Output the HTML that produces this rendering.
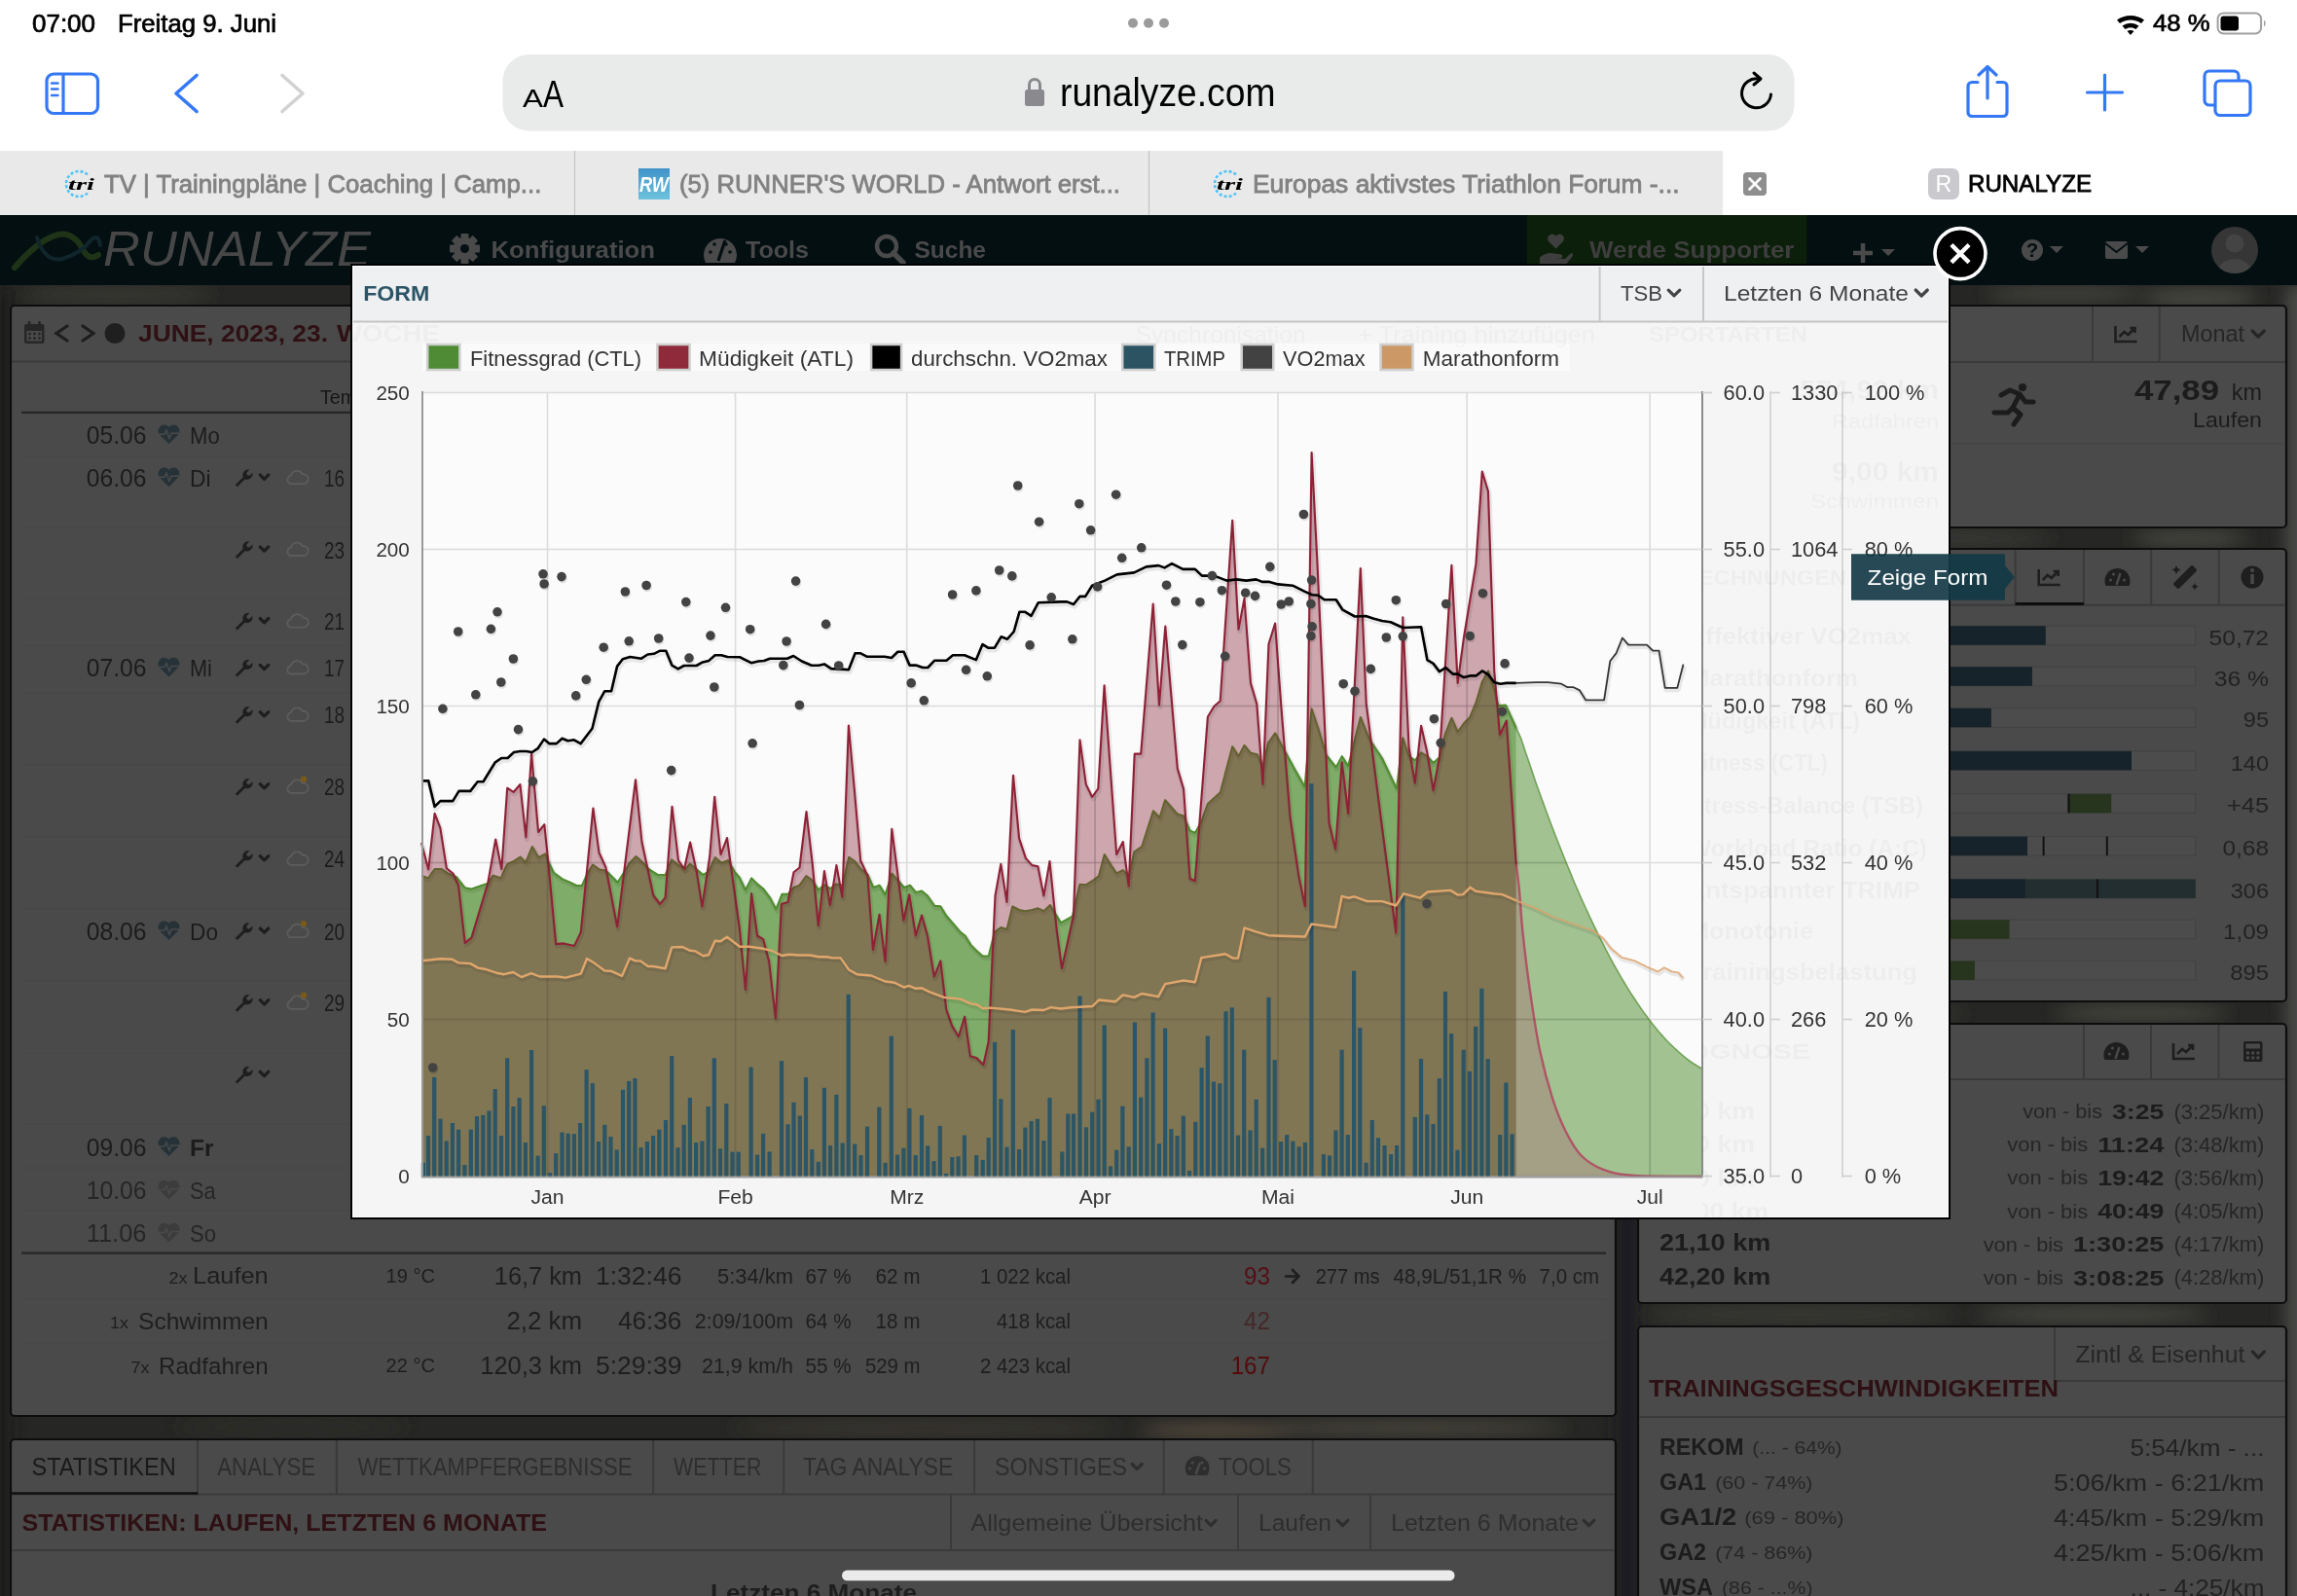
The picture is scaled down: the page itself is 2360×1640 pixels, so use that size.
<!DOCTYPE html>
<html><head><meta charset="utf-8"><title>Runalyze Form</title>
<style>html,body{margin:0;padding:0;background:#232323;width:2360px;height:1640px;overflow:hidden;font-family:"Liberation Sans",sans-serif}svg{display:block;will-change:transform}</style>
</head><body>
<svg width="2360" height="1640" viewBox="0 0 2360 1640" font-family="Liberation Sans, sans-serif">
<rect x="0.0" y="293.0" width="2360.0" height="1347.0" fill="#262624"/>
<defs><filter id="bl" x="-50%" y="-50%" width="200%" height="200%"><feGaussianBlur stdDeviation="9"/></filter></defs>
<g filter="url(#bl)">
<rect x="-20.0" y="293.0" width="31.0" height="1367.0" fill="#1c1c1c"/>
<rect x="2349.0" y="293.0" width="31.0" height="1367.0" fill="#4c4c48"/>
<rect x="1660.0" y="560.0" width="23.0" height="1100.0" fill="#1d1d20"/>
<ellipse cx="120" cy="303" rx="100" ry="8" fill="#3a3a34"/>
<ellipse cx="520" cy="305" rx="140" ry="7" fill="#35352f"/>
<ellipse cx="1760" cy="303" rx="90" ry="8" fill="#3c3c36"/>
<ellipse cx="2120" cy="302" rx="80" ry="8" fill="#45453f"/>
<ellipse cx="2260" cy="306" rx="60" ry="8" fill="#505049"/>
<ellipse cx="950" cy="1467" rx="200" ry="8" fill="#3a3833"/>
<ellipse cx="1450" cy="1467" rx="160" ry="8" fill="#4a463c"/>
<ellipse cx="1250" cy="1470" rx="80" ry="7" fill="#5a5040"/>
<ellipse cx="300" cy="1466" rx="120" ry="8" fill="#2e2e2c"/>
<ellipse cx="1950" cy="553" rx="160" ry="8" fill="#3e3e3a"/>
<ellipse cx="2250" cy="553" rx="60" ry="8" fill="#4a4a44"/>
<ellipse cx="1900" cy="1041" rx="120" ry="8" fill="#3a3a36"/>
<ellipse cx="2200" cy="1041" rx="90" ry="8" fill="#4a4a42"/>
<ellipse cx="1850" cy="1351" rx="160" ry="8" fill="#3e3e38"/>
<ellipse cx="2150" cy="1351" rx="120" ry="8" fill="#4a4a44"/>
<ellipse cx="1670" cy="420" rx="10" ry="100" fill="#3a3a36"/>
<ellipse cx="1670" cy="900" rx="10" ry="80" fill="#2e2e30"/>
</g>
<rect x="0.0" y="221.0" width="2360.0" height="72.0" fill="#040f12"/>
<path d="M15,275 Q40,246 60,241 Q76,238 86,258 Q92,268 101,262" fill="none" stroke="#1f3416" stroke-width="6" stroke-linecap="round"/>
<path d="M38,244 Q46,270 64,266 Q84,260 94,246 Q101,240 103,252" fill="none" stroke="#10262c" stroke-width="4" stroke-linecap="round"/>
<text x="106.0" y="272.5" font-size="50.87" fill="#474747" font-style="italic" textLength="275.0" lengthAdjust="spacingAndGlyphs">RUNALYZE</text>
<g transform="translate(477.5,255.5)" fill="#4a4a4a"><rect x="-4" y="-15.5" width="8" height="8" rx="1" transform="rotate(0)"/><rect x="-4" y="-15.5" width="8" height="8" rx="1" transform="rotate(45)"/><rect x="-4" y="-15.5" width="8" height="8" rx="1" transform="rotate(90)"/><rect x="-4" y="-15.5" width="8" height="8" rx="1" transform="rotate(135)"/><rect x="-4" y="-15.5" width="8" height="8" rx="1" transform="rotate(180)"/><rect x="-4" y="-15.5" width="8" height="8" rx="1" transform="rotate(225)"/><rect x="-4" y="-15.5" width="8" height="8" rx="1" transform="rotate(270)"/><rect x="-4" y="-15.5" width="8" height="8" rx="1" transform="rotate(315)"/><circle r="11.5"/><circle r="4.5" fill="#040f12"/></g>
<text x="504.5" y="265.0" font-size="24.71" fill="#4a4a4a" font-weight="bold" textLength="168.5" lengthAdjust="spacingAndGlyphs">Konfiguration</text>
<path d="M725,270 A17,17 0 1 1 755,270 Z" fill="#4a4a4a"/>
<path d="M738,268 L745,247" stroke="#040f12" stroke-width="3.2"/>
<circle cx="730.0" cy="259.0" r="1.8" fill="#040f12"/>
<circle cx="734.0" cy="251.0" r="1.8" fill="#040f12"/>
<circle cx="750.0" cy="259.0" r="1.8" fill="#040f12"/>
<circle cx="746.0" cy="251.0" r="1.8" fill="#040f12"/>
<text x="766.0" y="265.0" font-size="24.71" fill="#4a4a4a" font-weight="bold" textLength="65.0" lengthAdjust="spacingAndGlyphs">Tools</text>
<circle cx="911" cy="253" r="10" fill="none" stroke="#4a4a4a" stroke-width="4.5"/>
<line x1="918.0" y1="260.0" x2="928.0" y2="270.0" stroke="#4a4a4a" stroke-width="5.5" stroke-linecap="round"/>
<text x="939.5" y="265.0" font-size="24.71" fill="#4a4a4a" font-weight="bold" textLength="73.5" lengthAdjust="spacingAndGlyphs">Suche</text>
<rect x="1569.0" y="221.0" width="287.0" height="72.0" fill="#0c1f0a"/>
<path d="M1598.5,255.5 L1591,248 A4.6,4.6 0 0 1 1598.5,242.5 A4.6,4.6 0 0 1 1606,248 Z" fill="#3e3e3e"/>
<path d="M1582,271 V264.5 Q1589,258.5 1597,260.5 L1604,261.5 Q1607,263.5 1603.5,265.5 L1597,265.5 L1608,266 L1613.5,260.5 Q1617.5,259.5 1615.5,263.5 L1609.5,271 Z" fill="#3e3e3e"/>
<text x="1633.0" y="265.0" font-size="24.71" fill="#3e3e3e" font-weight="bold" textLength="210.5" lengthAdjust="spacingAndGlyphs">Werde Supporter</text>
<line x1="1914.0" y1="250.0" x2="1914.0" y2="270.0" stroke="#4a4a4a" stroke-width="4.5"/>
<line x1="1904.0" y1="260.0" x2="1924.0" y2="260.0" stroke="#4a4a4a" stroke-width="4.5"/>
<path d="M1933,256 L1947,256 L1940,263 Z" fill="#4a4a4a"/>
<circle cx="2088" cy="257" r="11" fill="#4a4a4a"/>
<text x="2088.0" y="264.0" font-size="20.35" fill="#040f12" font-weight="bold" text-anchor="middle">?</text>
<path d="M2106,253 L2120,253 L2113,260 Z" fill="#4a4a4a"/>
<rect x="2163.0" y="248.0" width="23.0" height="18.0" fill="#4a4a4a" rx="2.0"/>
<polyline points="2163,250 2174.5,259 2186,250" fill="none" stroke="#040f12" stroke-width="2"/>
<path d="M2194,253 L2208,253 L2201,260 Z" fill="#4a4a4a"/>
<defs><clipPath id="avc"><circle cx="2296" cy="257" r="24"/></clipPath></defs>
<circle cx="2296" cy="257" r="24" fill="#363636"/>
<g clip-path="url(#avc)" fill="#444"><circle cx="2296" cy="250" r="9.5"/><ellipse cx="2296" cy="281" rx="18" ry="15"/></g>
<rect x="11.0" y="314.0" width="1649.0" height="1141.0" rx="4" fill="#494a49" stroke="#0d0d0d" stroke-width="2.2"/>
<line x1="12.0" y1="371.5" x2="1659.0" y2="371.5" stroke="#3a3a3a" stroke-width="2.0"/>
<rect x="25.0" y="333.0" width="20.5" height="20.0" fill="#262626" rx="2.0"/>
<rect x="27.5" y="340.0" width="15.5" height="10.5" fill="#4a4a4a"/>
<rect x="29.2" y="341.7" width="2.6" height="2.6" fill="#262626"/>
<rect x="29.2" y="346.2" width="2.6" height="2.6" fill="#262626"/>
<rect x="34.2" y="341.7" width="2.6" height="2.6" fill="#262626"/>
<rect x="34.2" y="346.2" width="2.6" height="2.6" fill="#262626"/>
<rect x="39.2" y="341.7" width="2.6" height="2.6" fill="#262626"/>
<rect x="39.2" y="346.2" width="2.6" height="2.6" fill="#262626"/>
<line x1="30.0" y1="330.0" x2="30.0" y2="336.0" stroke="#262626" stroke-width="2.5"/>
<line x1="40.5" y1="330.0" x2="40.5" y2="336.0" stroke="#262626" stroke-width="2.5"/>
<polyline points="69,335 58,342.5 69,350" fill="none" stroke="#1e1e1e" stroke-width="3.2" stroke-linecap="round"/>
<polyline points="85,335 96,342.5 85,350" fill="none" stroke="#1e1e1e" stroke-width="3.2" stroke-linecap="round"/>
<circle cx="118" cy="342.5" r="10.5" fill="#1f1f1f"/>
<text x="142.0" y="350.8" font-size="23.69" fill="#2f1014" font-weight="bold" textLength="195.0" lengthAdjust="spacingAndGlyphs">JUNE, 2023, 23.</text>
<text x="346.0" y="350.8" font-size="23.69" fill="#2f1014" font-weight="bold" textLength="106.0" lengthAdjust="spacingAndGlyphs">WOCHE</text>
<text x="329.0" y="414.5" font-size="19.62" fill="#151515">Temp.</text>
<line x1="22.0" y1="423.8" x2="1650.0" y2="423.8" stroke="#262626" stroke-width="2.2"/>
<line x1="22.0" y1="469.3" x2="1650.0" y2="469.3" stroke="#464746" stroke-width="1.0"/>
<line x1="22.0" y1="541.4" x2="1650.0" y2="541.4" stroke="#464746" stroke-width="1.0"/>
<line x1="22.0" y1="615.0" x2="1650.0" y2="615.0" stroke="#464746" stroke-width="1.0"/>
<line x1="22.0" y1="663.6" x2="1650.0" y2="663.6" stroke="#464746" stroke-width="1.0"/>
<line x1="22.0" y1="712.2" x2="1650.0" y2="712.2" stroke="#464746" stroke-width="1.0"/>
<line x1="22.0" y1="785.9" x2="1650.0" y2="785.9" stroke="#464746" stroke-width="1.0"/>
<line x1="22.0" y1="860.0" x2="1650.0" y2="860.0" stroke="#464746" stroke-width="1.0"/>
<line x1="22.0" y1="933.6" x2="1650.0" y2="933.6" stroke="#464746" stroke-width="1.0"/>
<line x1="22.0" y1="1008.0" x2="1650.0" y2="1008.0" stroke="#464746" stroke-width="1.0"/>
<line x1="22.0" y1="1082.5" x2="1650.0" y2="1082.5" stroke="#464746" stroke-width="1.0"/>
<line x1="22.0" y1="1154.6" x2="1650.0" y2="1154.6" stroke="#464746" stroke-width="1.0"/>
<line x1="22.0" y1="1200.0" x2="1650.0" y2="1200.0" stroke="#464746" stroke-width="1.0"/>
<line x1="22.0" y1="1244.0" x2="1650.0" y2="1244.0" stroke="#464746" stroke-width="1.0"/>
<text x="88.7" y="455.9" font-size="25.44" fill="#1c1c1c" textLength="61.8" lengthAdjust="spacingAndGlyphs">05.06</text>
<g transform="translate(162.0,436.3)"><path d="M11.5,20 L2,10.5 A5.6,5.6 0 0 1 11.5,2.5 A5.6,5.6 0 0 1 21,10.5 Z" fill="#263238"/><polyline points="1,10 7,10 9,6 12,14 14,9 22,9" fill="none" stroke="#4a4a4a" stroke-width="1.5"/></g>
<text x="195.0" y="455.8" font-size="24.71" fill="#1c1c1c" textLength="30.7" lengthAdjust="spacingAndGlyphs">Mo</text>
<text x="88.7" y="499.8" font-size="25.44" fill="#1c1c1c" textLength="61.8" lengthAdjust="spacingAndGlyphs">06.06</text>
<g transform="translate(162.0,480.2)"><path d="M11.5,20 L2,10.5 A5.6,5.6 0 0 1 11.5,2.5 A5.6,5.6 0 0 1 21,10.5 Z" fill="#263238"/><polyline points="1,10 7,10 9,6 12,14 14,9 22,9" fill="none" stroke="#4a4a4a" stroke-width="1.5"/></g>
<text x="195.0" y="499.7" font-size="24.71" fill="#1c1c1c" textLength="21.5" lengthAdjust="spacingAndGlyphs">Di</text>
<text x="88.7" y="695.1" font-size="25.44" fill="#1c1c1c" textLength="61.8" lengthAdjust="spacingAndGlyphs">07.06</text>
<g transform="translate(162.0,675.5)"><path d="M11.5,20 L2,10.5 A5.6,5.6 0 0 1 11.5,2.5 A5.6,5.6 0 0 1 21,10.5 Z" fill="#263238"/><polyline points="1,10 7,10 9,6 12,14 14,9 22,9" fill="none" stroke="#4a4a4a" stroke-width="1.5"/></g>
<text x="195.0" y="695.0" font-size="24.71" fill="#1c1c1c" textLength="22.9" lengthAdjust="spacingAndGlyphs">Mi</text>
<text x="88.7" y="965.7" font-size="25.44" fill="#1c1c1c" textLength="61.8" lengthAdjust="spacingAndGlyphs">08.06</text>
<g transform="translate(162.0,946.1)"><path d="M11.5,20 L2,10.5 A5.6,5.6 0 0 1 11.5,2.5 A5.6,5.6 0 0 1 21,10.5 Z" fill="#263238"/><polyline points="1,10 7,10 9,6 12,14 14,9 22,9" fill="none" stroke="#4a4a4a" stroke-width="1.5"/></g>
<text x="195.0" y="965.6" font-size="24.71" fill="#1c1c1c" textLength="29.0" lengthAdjust="spacingAndGlyphs">Do</text>
<text x="88.7" y="1187.6" font-size="25.44" fill="#1c1c1c" textLength="61.8" lengthAdjust="spacingAndGlyphs">09.06</text>
<g transform="translate(162.0,1168.0)"><path d="M11.5,20 L2,10.5 A5.6,5.6 0 0 1 11.5,2.5 A5.6,5.6 0 0 1 21,10.5 Z" fill="#263238"/><polyline points="1,10 7,10 9,6 12,14 14,9 22,9" fill="none" stroke="#4a4a4a" stroke-width="1.5"/></g>
<text x="195.0" y="1187.5" font-size="24.71" fill="#1c1c1c" font-weight="bold" textLength="24.4" lengthAdjust="spacingAndGlyphs">Fr</text>
<text x="88.7" y="1232.2" font-size="25.44" fill="#262626" textLength="61.8" lengthAdjust="spacingAndGlyphs">10.06</text>
<g transform="translate(162.0,1212.6)"><path d="M11.5,20 L2,10.5 A5.6,5.6 0 0 1 11.5,2.5 A5.6,5.6 0 0 1 21,10.5 Z" fill="#3c3c3c"/><polyline points="1,10 7,10 9,6 12,14 14,9 22,9" fill="none" stroke="#4a4a4a" stroke-width="1.5"/></g>
<text x="195.0" y="1232.1" font-size="24.71" fill="#262626" textLength="26.6" lengthAdjust="spacingAndGlyphs">Sa</text>
<text x="88.7" y="1276.1" font-size="25.44" fill="#262626" textLength="61.8" lengthAdjust="spacingAndGlyphs">11.06</text>
<g transform="translate(162.0,1256.5)"><path d="M11.5,20 L2,10.5 A5.6,5.6 0 0 1 11.5,2.5 A5.6,5.6 0 0 1 21,10.5 Z" fill="#3c3c3c"/><polyline points="1,10 7,10 9,6 12,14 14,9 22,9" fill="none" stroke="#4a4a4a" stroke-width="1.5"/></g>
<text x="195.0" y="1276.0" font-size="24.71" fill="#262626" textLength="27.0" lengthAdjust="spacingAndGlyphs">So</text>
<g transform="translate(240.8,482.2)" fill="#1e1e1e"><path d="M1,16 L9,8 A5.5,5.5 0 0 1 15.5,0.5 L12.5,3.5 L13,6 L15.5,6.5 L18.5,3.5 A5.5,5.5 0 0 1 11,10 L3,18 Z"/></g>
<polyline points="267.2,488.0 271.5,492.4 275.8,488.0" fill="none" stroke="#1e1e1e" stroke-width="3.2" stroke-linecap="round" stroke-linejoin="round"/>
<path transform="translate(295.0,483.2)" d="M3,14 A4.5,4.5 0 0 1 4,5.5 A6.5,6.5 0 0 1 16,4 A4.8,4.8 0 0 1 17.5,14 Z" fill="none" stroke="#5c5c5c" stroke-width="1.8"/>
<text x="333.0" y="499.7" font-size="24.71" fill="#1c1c1c" textLength="21.0" lengthAdjust="spacingAndGlyphs">16</text>
<g transform="translate(240.8,556.0)" fill="#1e1e1e"><path d="M1,16 L9,8 A5.5,5.5 0 0 1 15.5,0.5 L12.5,3.5 L13,6 L15.5,6.5 L18.5,3.5 A5.5,5.5 0 0 1 11,10 L3,18 Z"/></g>
<polyline points="267.2,561.9 271.5,566.1 275.8,561.9" fill="none" stroke="#1e1e1e" stroke-width="3.2" stroke-linecap="round" stroke-linejoin="round"/>
<path transform="translate(295.0,557.0)" d="M3,14 A4.5,4.5 0 0 1 4,5.5 A6.5,6.5 0 0 1 16,4 A4.8,4.8 0 0 1 17.5,14 Z" fill="none" stroke="#5c5c5c" stroke-width="1.8"/>
<text x="333.0" y="573.5" font-size="24.71" fill="#1c1c1c" textLength="21.0" lengthAdjust="spacingAndGlyphs">23</text>
<g transform="translate(240.8,629.6)" fill="#1e1e1e"><path d="M1,16 L9,8 A5.5,5.5 0 0 1 15.5,0.5 L12.5,3.5 L13,6 L15.5,6.5 L18.5,3.5 A5.5,5.5 0 0 1 11,10 L3,18 Z"/></g>
<polyline points="267.2,635.5 271.5,639.8 275.8,635.5" fill="none" stroke="#1e1e1e" stroke-width="3.2" stroke-linecap="round" stroke-linejoin="round"/>
<path transform="translate(295.0,630.6)" d="M3,14 A4.5,4.5 0 0 1 4,5.5 A6.5,6.5 0 0 1 16,4 A4.8,4.8 0 0 1 17.5,14 Z" fill="none" stroke="#5c5c5c" stroke-width="1.8"/>
<text x="333.0" y="647.1" font-size="24.71" fill="#1c1c1c" textLength="21.0" lengthAdjust="spacingAndGlyphs">21</text>
<g transform="translate(240.8,677.5)" fill="#1e1e1e"><path d="M1,16 L9,8 A5.5,5.5 0 0 1 15.5,0.5 L12.5,3.5 L13,6 L15.5,6.5 L18.5,3.5 A5.5,5.5 0 0 1 11,10 L3,18 Z"/></g>
<polyline points="267.2,683.4 271.5,687.6 275.8,683.4" fill="none" stroke="#1e1e1e" stroke-width="3.2" stroke-linecap="round" stroke-linejoin="round"/>
<path transform="translate(295.0,678.5)" d="M3,14 A4.5,4.5 0 0 1 4,5.5 A6.5,6.5 0 0 1 16,4 A4.8,4.8 0 0 1 17.5,14 Z" fill="none" stroke="#5c5c5c" stroke-width="1.8"/>
<text x="333.0" y="695.0" font-size="24.71" fill="#1c1c1c" textLength="21.0" lengthAdjust="spacingAndGlyphs">17</text>
<g transform="translate(240.8,725.8)" fill="#1e1e1e"><path d="M1,16 L9,8 A5.5,5.5 0 0 1 15.5,0.5 L12.5,3.5 L13,6 L15.5,6.5 L18.5,3.5 A5.5,5.5 0 0 1 11,10 L3,18 Z"/></g>
<polyline points="267.2,731.6 271.5,735.9 275.8,731.6" fill="none" stroke="#1e1e1e" stroke-width="3.2" stroke-linecap="round" stroke-linejoin="round"/>
<path transform="translate(295.0,726.8)" d="M3,14 A4.5,4.5 0 0 1 4,5.5 A6.5,6.5 0 0 1 16,4 A4.8,4.8 0 0 1 17.5,14 Z" fill="none" stroke="#5c5c5c" stroke-width="1.8"/>
<text x="333.0" y="743.3" font-size="24.71" fill="#1c1c1c" textLength="21.0" lengthAdjust="spacingAndGlyphs">18</text>
<g transform="translate(240.8,799.8)" fill="#1e1e1e"><path d="M1,16 L9,8 A5.5,5.5 0 0 1 15.5,0.5 L12.5,3.5 L13,6 L15.5,6.5 L18.5,3.5 A5.5,5.5 0 0 1 11,10 L3,18 Z"/></g>
<polyline points="267.2,805.6 271.5,809.9 275.8,805.6" fill="none" stroke="#1e1e1e" stroke-width="3.2" stroke-linecap="round" stroke-linejoin="round"/>
<path transform="translate(295.0,800.8)" d="M3,14 A4.5,4.5 0 0 1 4,5.5 A6.5,6.5 0 0 1 16,4 A4.8,4.8 0 0 1 17.5,14 Z" fill="none" stroke="#5c5c5c" stroke-width="1.8"/><circle cx="312.0" cy="800.8" r="3.2" fill="#7a5a1a"/>
<text x="333.0" y="817.3" font-size="24.71" fill="#1c1c1c" textLength="21.0" lengthAdjust="spacingAndGlyphs">28</text>
<g transform="translate(240.8,873.8)" fill="#1e1e1e"><path d="M1,16 L9,8 A5.5,5.5 0 0 1 15.5,0.5 L12.5,3.5 L13,6 L15.5,6.5 L18.5,3.5 A5.5,5.5 0 0 1 11,10 L3,18 Z"/></g>
<polyline points="267.2,879.6 271.5,883.9 275.8,879.6" fill="none" stroke="#1e1e1e" stroke-width="3.2" stroke-linecap="round" stroke-linejoin="round"/>
<path transform="translate(295.0,874.8)" d="M3,14 A4.5,4.5 0 0 1 4,5.5 A6.5,6.5 0 0 1 16,4 A4.8,4.8 0 0 1 17.5,14 Z" fill="none" stroke="#5c5c5c" stroke-width="1.8"/>
<text x="333.0" y="891.3" font-size="24.71" fill="#1c1c1c" textLength="21.0" lengthAdjust="spacingAndGlyphs">24</text>
<g transform="translate(240.8,948.1)" fill="#1e1e1e"><path d="M1,16 L9,8 A5.5,5.5 0 0 1 15.5,0.5 L12.5,3.5 L13,6 L15.5,6.5 L18.5,3.5 A5.5,5.5 0 0 1 11,10 L3,18 Z"/></g>
<polyline points="267.2,954.0 271.5,958.2 275.8,954.0" fill="none" stroke="#1e1e1e" stroke-width="3.2" stroke-linecap="round" stroke-linejoin="round"/>
<path transform="translate(295.0,949.1)" d="M3,14 A4.5,4.5 0 0 1 4,5.5 A6.5,6.5 0 0 1 16,4 A4.8,4.8 0 0 1 17.5,14 Z" fill="none" stroke="#5c5c5c" stroke-width="1.8"/><circle cx="312.0" cy="949.1" r="3.2" fill="#7a5a1a"/>
<text x="333.0" y="965.6" font-size="24.71" fill="#1c1c1c" textLength="21.0" lengthAdjust="spacingAndGlyphs">20</text>
<g transform="translate(240.8,1021.8)" fill="#1e1e1e"><path d="M1,16 L9,8 A5.5,5.5 0 0 1 15.5,0.5 L12.5,3.5 L13,6 L15.5,6.5 L18.5,3.5 A5.5,5.5 0 0 1 11,10 L3,18 Z"/></g>
<polyline points="267.2,1027.6 271.5,1032.0 275.8,1027.6" fill="none" stroke="#1e1e1e" stroke-width="3.2" stroke-linecap="round" stroke-linejoin="round"/>
<path transform="translate(295.0,1022.8)" d="M3,14 A4.5,4.5 0 0 1 4,5.5 A6.5,6.5 0 0 1 16,4 A4.8,4.8 0 0 1 17.5,14 Z" fill="none" stroke="#5c5c5c" stroke-width="1.8"/><circle cx="312.0" cy="1022.8" r="3.2" fill="#7a5a1a"/>
<text x="333.0" y="1039.3" font-size="24.71" fill="#1c1c1c" textLength="21.0" lengthAdjust="spacingAndGlyphs">29</text>
<g transform="translate(240.8,1095.5)" fill="#1e1e1e"><path d="M1,16 L9,8 A5.5,5.5 0 0 1 15.5,0.5 L12.5,3.5 L13,6 L15.5,6.5 L18.5,3.5 A5.5,5.5 0 0 1 11,10 L3,18 Z"/></g>
<polyline points="267.2,1101.3 271.5,1105.7 275.8,1101.3" fill="none" stroke="#1e1e1e" stroke-width="3.2" stroke-linecap="round" stroke-linejoin="round"/>
<line x1="22.0" y1="1287.7" x2="1650.0" y2="1287.7" stroke="#262626" stroke-width="2.2"/>
<line x1="22.0" y1="1334.7" x2="1650.0" y2="1334.7" stroke="#464746" stroke-width="1.0"/>
<line x1="22.0" y1="1380.0" x2="1650.0" y2="1380.0" stroke="#464746" stroke-width="1.0"/>
<text x="173.5" y="1318.7" font-size="16.72" fill="#1e1e1e" textLength="19.0" lengthAdjust="spacingAndGlyphs">2x</text>
<text x="198.0" y="1319.3" font-size="23.69" fill="#1e1e1e" textLength="77.7" lengthAdjust="spacingAndGlyphs">Laufen</text>
<text x="396.5" y="1317.9" font-size="19.48" fill="#1e1e1e" textLength="50.5" lengthAdjust="spacingAndGlyphs">19 °C</text>
<text x="507.8" y="1319.8" font-size="25.15" fill="#1e1e1e" textLength="90.2" lengthAdjust="spacingAndGlyphs">16,7 km</text>
<text x="611.9" y="1319.8" font-size="25.15" fill="#1e1e1e" textLength="88.5" lengthAdjust="spacingAndGlyphs">1:32:46</text>
<text x="737.0" y="1318.5" font-size="21.22" fill="#1e1e1e" textLength="78.0" lengthAdjust="spacingAndGlyphs">5:34/km</text>
<text x="827.6" y="1318.5" font-size="21.22" fill="#1e1e1e" textLength="47.1" lengthAdjust="spacingAndGlyphs">67 %</text>
<text x="899.6" y="1318.5" font-size="21.22" fill="#1e1e1e" textLength="46.0" lengthAdjust="spacingAndGlyphs">62 m</text>
<text x="1006.9" y="1318.5" font-size="21.22" fill="#1e1e1e" textLength="93.1" lengthAdjust="spacingAndGlyphs">1 022 kcal</text>
<text x="1278.0" y="1319.8" font-size="25.15" fill="#550f14" textLength="27.0" lengthAdjust="spacingAndGlyphs">93</text>
<text x="113.0" y="1365.0" font-size="16.72" fill="#1e1e1e" textLength="19.0" lengthAdjust="spacingAndGlyphs">1x</text>
<text x="142.0" y="1365.6" font-size="23.69" fill="#1e1e1e" textLength="133.7" lengthAdjust="spacingAndGlyphs">Schwimmen</text>
<text x="520.4" y="1366.1" font-size="25.15" fill="#1e1e1e" textLength="77.6" lengthAdjust="spacingAndGlyphs">2,2 km</text>
<text x="635.0" y="1366.1" font-size="25.15" fill="#1e1e1e" textLength="65.4" lengthAdjust="spacingAndGlyphs">46:36</text>
<text x="713.8" y="1364.8" font-size="21.22" fill="#1e1e1e" textLength="101.2" lengthAdjust="spacingAndGlyphs">2:09/100m</text>
<text x="827.6" y="1364.8" font-size="21.22" fill="#1e1e1e" textLength="47.1" lengthAdjust="spacingAndGlyphs">64 %</text>
<text x="899.6" y="1364.8" font-size="21.22" fill="#1e1e1e" textLength="46.0" lengthAdjust="spacingAndGlyphs">18 m</text>
<text x="1024.0" y="1364.8" font-size="21.22" fill="#1e1e1e" textLength="76.0" lengthAdjust="spacingAndGlyphs">418 kcal</text>
<text x="1278.0" y="1366.1" font-size="25.15" fill="#46282a" textLength="27.0" lengthAdjust="spacingAndGlyphs">42</text>
<text x="134.4" y="1410.9" font-size="16.72" fill="#1e1e1e" textLength="19.0" lengthAdjust="spacingAndGlyphs">7x</text>
<text x="163.0" y="1411.5" font-size="23.69" fill="#1e1e1e" textLength="112.7" lengthAdjust="spacingAndGlyphs">Radfahren</text>
<text x="396.5" y="1410.1" font-size="19.48" fill="#1e1e1e" textLength="50.5" lengthAdjust="spacingAndGlyphs">22 °C</text>
<text x="493.3" y="1412.0" font-size="25.15" fill="#1e1e1e" textLength="104.7" lengthAdjust="spacingAndGlyphs">120,3 km</text>
<text x="611.9" y="1412.0" font-size="25.15" fill="#1e1e1e" textLength="88.5" lengthAdjust="spacingAndGlyphs">5:29:39</text>
<text x="721.0" y="1410.7" font-size="21.22" fill="#1e1e1e" textLength="94.0" lengthAdjust="spacingAndGlyphs">21,9 km/h</text>
<text x="827.6" y="1410.7" font-size="21.22" fill="#1e1e1e" textLength="47.1" lengthAdjust="spacingAndGlyphs">55 %</text>
<text x="888.9" y="1410.7" font-size="21.22" fill="#1e1e1e" textLength="56.7" lengthAdjust="spacingAndGlyphs">529 m</text>
<text x="1006.9" y="1410.7" font-size="21.22" fill="#1e1e1e" textLength="93.1" lengthAdjust="spacingAndGlyphs">2 423 kcal</text>
<text x="1264.7" y="1412.0" font-size="25.15" fill="#550a0c" textLength="40.3" lengthAdjust="spacingAndGlyphs">167</text>
<path d="M1321,1311.5 H1334 M1328,1305 L1334.5,1311.5 L1328,1318" fill="none" stroke="#1e1e1e" stroke-width="2.6" stroke-linecap="round" stroke-linejoin="round"/>
<text x="1351.7" y="1318.5" font-size="21.22" fill="#1e1e1e" textLength="65.9" lengthAdjust="spacingAndGlyphs">277 ms</text>
<text x="1431.4" y="1318.5" font-size="21.22" fill="#1e1e1e" textLength="136.8" lengthAdjust="spacingAndGlyphs">48,9L/51,1R %</text>
<text x="1581.6" y="1318.5" font-size="21.22" fill="#1e1e1e" textLength="61.4" lengthAdjust="spacingAndGlyphs">7,0 cm</text>
<rect x="11.0" y="1479.0" width="1649.0" height="221.0" rx="4" fill="#494a49" stroke="#0d0d0d" stroke-width="2.2"/>
<line x1="12.0" y1="1535.6" x2="1659.0" y2="1535.6" stroke="#3a3a3a" stroke-width="2.0"/>
<line x1="203.0" y1="1480.0" x2="203.0" y2="1535.0" stroke="#3a3a3a" stroke-width="2.0"/>
<line x1="345.9" y1="1480.0" x2="345.9" y2="1535.0" stroke="#3a3a3a" stroke-width="2.0"/>
<line x1="671.1" y1="1480.0" x2="671.1" y2="1535.0" stroke="#3a3a3a" stroke-width="2.0"/>
<line x1="805.2" y1="1480.0" x2="805.2" y2="1535.0" stroke="#3a3a3a" stroke-width="2.0"/>
<line x1="1001.0" y1="1480.0" x2="1001.0" y2="1535.0" stroke="#3a3a3a" stroke-width="2.0"/>
<line x1="1195.8" y1="1480.0" x2="1195.8" y2="1535.0" stroke="#3a3a3a" stroke-width="2.0"/>
<line x1="1348.7" y1="1480.0" x2="1348.7" y2="1535.0" stroke="#3a3a3a" stroke-width="2.0"/>
<line x1="12.0" y1="1534.5" x2="203.5" y2="1534.5" stroke="#111" stroke-width="2.5"/>
<text x="32.5" y="1515.8" font-size="25.29" fill="#1a1a1a" textLength="148.2" lengthAdjust="spacingAndGlyphs">STATISTIKEN</text>
<text x="223.3" y="1515.8" font-size="25.29" fill="#2e2e2e" textLength="100.9" lengthAdjust="spacingAndGlyphs">ANALYSE</text>
<text x="367.5" y="1515.8" font-size="25.29" fill="#2e2e2e" textLength="281.9" lengthAdjust="spacingAndGlyphs">WETTKAMPFERGEBNISSE</text>
<text x="692.0" y="1515.8" font-size="25.29" fill="#2e2e2e" textLength="90.4" lengthAdjust="spacingAndGlyphs">WETTER</text>
<text x="825.0" y="1515.8" font-size="25.29" fill="#2e2e2e" textLength="154.3" lengthAdjust="spacingAndGlyphs">TAG ANALYSE</text>
<text x="1022.0" y="1515.8" font-size="25.29" fill="#2e2e2e" textLength="136.0" lengthAdjust="spacingAndGlyphs">SONSTIGES</text>
<text x="1252.0" y="1515.8" font-size="25.29" fill="#2e2e2e" textLength="74.8" lengthAdjust="spacingAndGlyphs">TOOLS</text>
<polyline points="1163.2,1504.5 1168.2,1509.5 1173.3,1504.5" fill="none" stroke="#2e2e2e" stroke-width="3.2" stroke-linecap="round" stroke-linejoin="round"/>
<path d="M1220,1516 A12.45,12.45 0 1 1 1240.2,1516 Z" fill="#2e2e2e"/>
<line x1="1228.5" y1="1515.0" x2="1233.0" y2="1503.0" stroke="#494a49" stroke-width="2.4"/>
<circle cx="1222.6" cy="1509.0" r="1.5" fill="#494a49"/>
<circle cx="1225.1" cy="1503.0" r="1.5" fill="#494a49"/>
<circle cx="1237.6" cy="1509.0" r="1.5" fill="#494a49"/>
<circle cx="1235.1" cy="1503.0" r="1.5" fill="#494a49"/>
<text x="22.4" y="1573.2" font-size="23.55" fill="#2f1014" font-weight="bold" textLength="539.6" lengthAdjust="spacingAndGlyphs">STATISTIKEN: LAUFEN, LETZTEN 6 MONATE</text>
<line x1="977.0" y1="1536.0" x2="977.0" y2="1593.0" stroke="#3a3a3a" stroke-width="2.0"/>
<line x1="1272.0" y1="1536.0" x2="1272.0" y2="1593.0" stroke="#3a3a3a" stroke-width="2.0"/>
<line x1="1408.0" y1="1536.0" x2="1408.0" y2="1593.0" stroke="#3a3a3a" stroke-width="2.0"/>
<line x1="12.0" y1="1593.0" x2="1659.0" y2="1593.0" stroke="#3a3a3a" stroke-width="2.0"/>
<text x="997.3" y="1573.0" font-size="24.71" fill="#2e2e2e" textLength="238.7" lengthAdjust="spacingAndGlyphs">Allgemeine Übersicht</text>
<polyline points="1239.2,1562.5 1244.1,1567.5 1249.0,1562.5" fill="none" stroke="#2e2e2e" stroke-width="3.2" stroke-linecap="round" stroke-linejoin="round"/>
<text x="1293.0" y="1573.0" font-size="24.71" fill="#2e2e2e" textLength="75.0" lengthAdjust="spacingAndGlyphs">Laufen</text>
<polyline points="1374.2,1562.3 1379.5,1567.7 1384.8,1562.3" fill="none" stroke="#2e2e2e" stroke-width="3.2" stroke-linecap="round" stroke-linejoin="round"/>
<text x="1429.0" y="1573.0" font-size="24.71" fill="#2e2e2e" textLength="193.0" lengthAdjust="spacingAndGlyphs">Letzten 6 Monate</text>
<polyline points="1627.2,1562.3 1632.5,1567.7 1637.8,1562.3" fill="none" stroke="#2e2e2e" stroke-width="3.2" stroke-linecap="round" stroke-linejoin="round"/>
<text x="730.0" y="1645.0" font-size="24.71" fill="#1e1e1e" font-weight="bold" textLength="212.0" lengthAdjust="spacingAndGlyphs">Letzten 6 Monate</text>
<rect x="1683.0" y="314.0" width="666.0" height="228.0" rx="4" fill="#494a49" stroke="#0d0d0d" stroke-width="2.2"/>
<line x1="1684.0" y1="372.0" x2="2348.0" y2="372.0" stroke="#3a3a3a" stroke-width="2.0"/>
<line x1="2150.0" y1="315.0" x2="2150.0" y2="372.0" stroke="#3a3a3a" stroke-width="2.0"/>
<line x1="2218.7" y1="315.0" x2="2218.7" y2="372.0" stroke="#3a3a3a" stroke-width="2.0"/>
<g transform="translate(2184.5,343.0)" fill="none" stroke="#1e1e1e" stroke-width="2.6"><polyline points="-11,-8 -11,8 11,8"/><polyline points="-7,3 -2,-2 2,1 8,-5" stroke-linejoin="miter"/><path d="M4,-6 L9,-6 L9,-1" /></g>
<text x="2241.0" y="351.0" font-size="23.26" fill="#262626" textLength="65.0" lengthAdjust="spacingAndGlyphs">Monat</text>
<polyline points="2314.2,340.0 2320.2,346.0 2326.3,340.0" fill="none" stroke="#262626" stroke-width="3.2" stroke-linecap="round" stroke-linejoin="round"/>
<g transform="translate(2048,393)" fill="none" stroke="#1c1c1c" stroke-width="5" stroke-linecap="round" stroke-linejoin="round"><circle cx="30" cy="5" r="4" fill="#1c1c1c" stroke="none"/><polyline points="8,13 17,8 27,12 33,20 41,20"/><polyline points="27,12 20,26 28,33 21,43"/><polyline points="20,26 15,31 1,31"/></g>
<text x="2193.0" y="410.7" font-size="29.07" fill="#1c1c1c" font-weight="bold" textLength="87.0" lengthAdjust="spacingAndGlyphs">47,89</text>
<text x="2292.8" y="411.0" font-size="23.26" fill="#1c1c1c" textLength="31.2" lengthAdjust="spacingAndGlyphs">km</text>
<text x="2253.0" y="439.0" font-size="22.38" fill="#1c1c1c" textLength="71.0" lengthAdjust="spacingAndGlyphs">Laufen</text>
<line x1="1684.0" y1="455.8" x2="2348.0" y2="455.8" stroke="#454545" stroke-width="1.2"/>
<rect x="1683.0" y="564.0" width="666.0" height="465.0" rx="4" fill="#494a49" stroke="#0d0d0d" stroke-width="2.2"/>
<line x1="1684.0" y1="621.8" x2="2348.0" y2="621.8" stroke="#3a3a3a" stroke-width="2.0"/>
<line x1="2070.5" y1="565.0" x2="2070.5" y2="621.0" stroke="#3a3a3a" stroke-width="2.0"/>
<line x1="2140.9" y1="565.0" x2="2140.9" y2="621.0" stroke="#3a3a3a" stroke-width="2.0"/>
<line x1="2210.2" y1="565.0" x2="2210.2" y2="621.0" stroke="#3a3a3a" stroke-width="2.0"/>
<line x1="2279.8" y1="565.0" x2="2279.8" y2="621.0" stroke="#3a3a3a" stroke-width="2.0"/>
<line x1="2070.5" y1="620.5" x2="2141.0" y2="620.5" stroke="#0e0e0e" stroke-width="3.0"/>
<g transform="translate(2105.7,593.0)" fill="none" stroke="#1e1e1e" stroke-width="2.6"><polyline points="-11,-8 -11,8 11,8"/><polyline points="-7,3 -2,-2 2,1 8,-5" stroke-linejoin="miter"/><path d="M4,-6 L9,-6 L9,-1" /></g>
<g transform="translate(2175.5,595.0)"><path d="M-12,7 A13,13 0 1 1 12,7 Z" fill="#1e1e1e"/><line x1="-1" y1="6" x2="3" y2="-6" stroke="#494a49" stroke-width="2.4"/><circle cx="-7" cy="1" r="1.5" fill="#494a49"/><circle cx="7" cy="1" r="1.5" fill="#494a49"/><circle cx="-4" cy="-5" r="1.5" fill="#494a49"/></g>
<g transform="translate(2245,593)"><rect x="-4" y="-14" width="8" height="28" rx="2" transform="rotate(45)" fill="#1e1e1e"/><path d="M-9,-12 l1.5,3 3,1.5 -3,1.5 -1.5,3 -1.5,-3 -3,-1.5 3,-1.5z M10,6 l1.2,2.5 2.5,1.2 -2.5,1.2 -1.2,2.5 -1.2,-2.5 -2.5,-1.2 2.5,-1.2z" fill="#1e1e1e"/></g>
<circle cx="2314" cy="593" r="11.5" fill="#1e1e1e"/>
<rect x="2312.3" y="590.0" width="3.4" height="10.0" fill="#4a4a4a"/>
<circle cx="2314" cy="586" r="2" fill="#4a4a4a"/>
<rect x="1990" y="643.3" width="265.7" height="19.5" fill="#4b4c4b" stroke="#424342" stroke-width="1"/>
<rect x="1990.0" y="643.3" width="111.8" height="19.5" fill="#17232a"/>
<text x="2269.6" y="662.9" font-size="22.38" fill="#222" textLength="61.4" lengthAdjust="spacingAndGlyphs">50,72</text>
<rect x="1990" y="685.3" width="265.7" height="19.5" fill="#4b4c4b" stroke="#424342" stroke-width="1"/>
<rect x="1990.0" y="685.3" width="97.9" height="19.5" fill="#17232a"/>
<text x="2274.7" y="704.9" font-size="22.38" fill="#222" textLength="56.3" lengthAdjust="spacingAndGlyphs">36 %</text>
<rect x="1990" y="727.8" width="265.7" height="19.5" fill="#4b4c4b" stroke="#424342" stroke-width="1"/>
<rect x="1990.0" y="727.8" width="55.9" height="19.5" fill="#17232a"/>
<text x="2304.8" y="747.4" font-size="22.38" fill="#222" textLength="26.2" lengthAdjust="spacingAndGlyphs">95</text>
<rect x="1990" y="771.9" width="265.7" height="19.5" fill="#4b4c4b" stroke="#424342" stroke-width="1"/>
<rect x="1990.0" y="771.9" width="200.0" height="19.5" fill="#17232a"/>
<text x="2291.8" y="791.5" font-size="22.38" fill="#222" textLength="39.2" lengthAdjust="spacingAndGlyphs">140</text>
<rect x="1990" y="815.8" width="265.7" height="19.5" fill="#4b4c4b" stroke="#424342" stroke-width="1"/>
<rect x="2125.7" y="815.8" width="43.5" height="19.5" fill="#27351e"/>
<line x1="2125.5" y1="815.8" x2="2125.5" y2="835.3" stroke="#111" stroke-width="2.2"/>
<text x="2288.0" y="835.4" font-size="22.38" fill="#222" textLength="43.0" lengthAdjust="spacingAndGlyphs">+45</text>
<rect x="1990" y="859.6" width="265.7" height="19.5" fill="#4b4c4b" stroke="#424342" stroke-width="1"/>
<rect x="1990.0" y="859.6" width="93.0" height="19.5" fill="#17232a"/>
<line x1="2099.6" y1="859.6" x2="2099.6" y2="879.1" stroke="#111" stroke-width="2.0"/>
<line x1="2164.8" y1="859.6" x2="2164.8" y2="879.1" stroke="#111" stroke-width="2.0"/>
<text x="2283.4" y="879.2" font-size="22.38" fill="#222" textLength="47.6" lengthAdjust="spacingAndGlyphs">0,68</text>
<rect x="1990" y="903.5" width="265.7" height="19.5" fill="#4b4c4b" stroke="#424342" stroke-width="1"/>
<rect x="1990.0" y="903.5" width="265.7" height="19.5" fill="#222e30"/>
<rect x="1990.0" y="903.5" width="90.8" height="19.5" fill="#17232a"/>
<line x1="2155.0" y1="903.5" x2="2155.0" y2="923.0" stroke="#111" stroke-width="2.0"/>
<text x="2291.8" y="923.1" font-size="22.38" fill="#222" textLength="39.2" lengthAdjust="spacingAndGlyphs">306</text>
<rect x="1990" y="945.2" width="265.7" height="19.5" fill="#4b4c4b" stroke="#424342" stroke-width="1"/>
<rect x="1990.0" y="945.2" width="74.5" height="19.5" fill="#27351e"/>
<text x="2284.0" y="964.8" font-size="22.38" fill="#222" textLength="47.0" lengthAdjust="spacingAndGlyphs">1,09</text>
<rect x="1990" y="987.5" width="265.7" height="19.5" fill="#4b4c4b" stroke="#424342" stroke-width="1"/>
<rect x="1990.0" y="987.5" width="39.0" height="19.5" fill="#27351e"/>
<text x="2291.2" y="1007.1" font-size="22.38" fill="#222" textLength="39.8" lengthAdjust="spacingAndGlyphs">895</text>
<rect x="1683.0" y="1052.0" width="666.0" height="287.0" rx="4" fill="#494a49" stroke="#0d0d0d" stroke-width="2.2"/>
<line x1="1684.0" y1="1109.0" x2="2348.0" y2="1109.0" stroke="#3a3a3a" stroke-width="2.0"/>
<line x1="2141.0" y1="1053.0" x2="2141.0" y2="1109.0" stroke="#3a3a3a" stroke-width="2.0"/>
<line x1="2210.0" y1="1053.0" x2="2210.0" y2="1109.0" stroke="#3a3a3a" stroke-width="2.0"/>
<line x1="2279.5" y1="1053.0" x2="2279.5" y2="1109.0" stroke="#3a3a3a" stroke-width="2.0"/>
<g transform="translate(2174.4,1082.0)"><path d="M-12,7 A13,13 0 1 1 12,7 Z" fill="#1e1e1e"/><line x1="-1" y1="6" x2="3" y2="-6" stroke="#494a49" stroke-width="2.4"/><circle cx="-7" cy="1" r="1.5" fill="#494a49"/><circle cx="7" cy="1" r="1.5" fill="#494a49"/><circle cx="-4" cy="-5" r="1.5" fill="#494a49"/></g>
<g transform="translate(2244.0,1080.0)" fill="none" stroke="#1e1e1e" stroke-width="2.6"><polyline points="-11,-8 -11,8 11,8"/><polyline points="-7,3 -2,-2 2,1 8,-5" stroke-linejoin="miter"/><path d="M4,-6 L9,-6 L9,-1" /></g>
<rect x="2305.0" y="1070.0" width="19.5" height="21.0" fill="#1e1e1e" rx="2.0"/>
<rect x="2307.5" y="1072.5" width="14.5" height="5.0" fill="#494a49"/>
<rect x="2308.0" y="1080.5" width="3.0" height="3.0" fill="#4a4a4a"/>
<rect x="2308.0" y="1085.5" width="3.0" height="3.0" fill="#4a4a4a"/>
<rect x="2313.2" y="1080.5" width="3.0" height="3.0" fill="#4a4a4a"/>
<rect x="2313.2" y="1085.5" width="3.0" height="3.0" fill="#4a4a4a"/>
<rect x="2318.4" y="1080.5" width="3.0" height="3.0" fill="#4a4a4a"/>
<rect x="2318.4" y="1085.5" width="3.0" height="3.0" fill="#4a4a4a"/>
<text x="2078.2" y="1149.2" font-size="21.08" fill="#262626" textLength="81.8" lengthAdjust="spacingAndGlyphs">von - bis</text>
<text x="2170.0" y="1150.0" font-size="22.82" fill="#1c1c1c" font-weight="bold" textLength="53.4" lengthAdjust="spacingAndGlyphs">3:25</text>
<text x="2233.4" y="1149.7" font-size="21.51" fill="#262626" textLength="93.0" lengthAdjust="spacingAndGlyphs">(3:25/km)</text>
<text x="2062.2" y="1183.3" font-size="21.08" fill="#262626" textLength="83.0" lengthAdjust="spacingAndGlyphs">von - bis</text>
<text x="2155.2" y="1184.1" font-size="22.82" fill="#1c1c1c" font-weight="bold" textLength="68.2" lengthAdjust="spacingAndGlyphs">11:24</text>
<text x="2233.4" y="1183.8" font-size="21.51" fill="#262626" textLength="93.0" lengthAdjust="spacingAndGlyphs">(3:48/km)</text>
<text x="2062.2" y="1217.4" font-size="21.08" fill="#262626" textLength="83.0" lengthAdjust="spacingAndGlyphs">von - bis</text>
<text x="2155.2" y="1218.2" font-size="22.82" fill="#1c1c1c" font-weight="bold" textLength="68.2" lengthAdjust="spacingAndGlyphs">19:42</text>
<text x="2233.4" y="1217.9" font-size="21.51" fill="#262626" textLength="93.0" lengthAdjust="spacingAndGlyphs">(3:56/km)</text>
<text x="2062.2" y="1251.5" font-size="21.08" fill="#262626" textLength="83.0" lengthAdjust="spacingAndGlyphs">von - bis</text>
<text x="2155.2" y="1252.3" font-size="22.82" fill="#1c1c1c" font-weight="bold" textLength="68.2" lengthAdjust="spacingAndGlyphs">40:49</text>
<text x="2233.4" y="1252.0" font-size="21.51" fill="#262626" textLength="93.0" lengthAdjust="spacingAndGlyphs">(4:05/km)</text>
<text x="2037.7" y="1285.6" font-size="21.08" fill="#262626" textLength="82.3" lengthAdjust="spacingAndGlyphs">von - bis</text>
<text x="2130.0" y="1286.4" font-size="22.82" fill="#1c1c1c" font-weight="bold" textLength="93.4" lengthAdjust="spacingAndGlyphs">1:30:25</text>
<text x="2233.4" y="1286.1" font-size="21.51" fill="#262626" textLength="93.0" lengthAdjust="spacingAndGlyphs">(4:17/km)</text>
<text x="2037.7" y="1319.7" font-size="21.08" fill="#262626" textLength="82.3" lengthAdjust="spacingAndGlyphs">von - bis</text>
<text x="2130.0" y="1320.5" font-size="22.82" fill="#1c1c1c" font-weight="bold" textLength="93.4" lengthAdjust="spacingAndGlyphs">3:08:25</text>
<text x="2233.4" y="1320.2" font-size="21.51" fill="#262626" textLength="93.0" lengthAdjust="spacingAndGlyphs">(4:28/km)</text>
<text x="1705.0" y="1285.4" font-size="23.26" fill="#1c1c1c" font-weight="bold" textLength="114.2" lengthAdjust="spacingAndGlyphs">21,10 km</text>
<text x="1705.0" y="1319.5" font-size="23.26" fill="#1c1c1c" font-weight="bold" textLength="114.2" lengthAdjust="spacingAndGlyphs">42,20 km</text>
<rect x="1683.0" y="1363.0" width="666.0" height="337.0" rx="4" fill="#494a49" stroke="#0d0d0d" stroke-width="2.2"/>
<line x1="2111.0" y1="1364.0" x2="2111.0" y2="1419.0" stroke="#3a3a3a" stroke-width="2.0"/>
<line x1="2111.0" y1="1419.0" x2="2348.0" y2="1419.0" stroke="#3a3a3a" stroke-width="2.0"/>
<text x="2132.3" y="1399.8" font-size="24.42" fill="#262626" textLength="174.1" lengthAdjust="spacingAndGlyphs">Zintl &amp; Eisenhut</text>
<polyline points="2314.2,1388.9 2320.3,1395.1 2326.4,1388.9" fill="none" stroke="#262626" stroke-width="3.2" stroke-linecap="round" stroke-linejoin="round"/>
<text x="1694.0" y="1435.0" font-size="23.26" fill="#2f1014" font-weight="bold" textLength="421.0" lengthAdjust="spacingAndGlyphs">TRAININGSGESCHWINDIGKEITEN</text>
<line x1="1684.0" y1="1456.0" x2="2348.0" y2="1456.0" stroke="#3a3a3a" stroke-width="2.0"/>
<text x="1705.0" y="1495.0" font-size="23.26" fill="#1c1c1c" font-weight="bold" textLength="86.5" lengthAdjust="spacingAndGlyphs">REKOM</text>
<text x="1800.3" y="1493.5" font-size="18.17" fill="#262626" textLength="92.3" lengthAdjust="spacingAndGlyphs">(... - 64%)</text>
<text x="2188.5" y="1495.5" font-size="24.71" fill="#222" textLength="137.9" lengthAdjust="spacingAndGlyphs">5:54/km - ...</text>
<text x="1705.0" y="1531.0" font-size="23.26" fill="#1c1c1c" font-weight="bold" textLength="48.0" lengthAdjust="spacingAndGlyphs">GA1</text>
<text x="1762.2" y="1529.5" font-size="18.17" fill="#262626" textLength="100.3" lengthAdjust="spacingAndGlyphs">(60 - 74%)</text>
<text x="2109.9" y="1531.5" font-size="24.71" fill="#222" textLength="216.5" lengthAdjust="spacingAndGlyphs">5:06/km - 6:21/km</text>
<text x="1705.0" y="1567.0" font-size="23.26" fill="#1c1c1c" font-weight="bold" textLength="79.3" lengthAdjust="spacingAndGlyphs">GA1/2</text>
<text x="1792.3" y="1565.5" font-size="18.17" fill="#262626" textLength="102.3" lengthAdjust="spacingAndGlyphs">(69 - 80%)</text>
<text x="2109.9" y="1567.5" font-size="24.71" fill="#222" textLength="216.5" lengthAdjust="spacingAndGlyphs">4:45/km - 5:29/km</text>
<text x="1705.0" y="1603.0" font-size="23.26" fill="#1c1c1c" font-weight="bold" textLength="48.0" lengthAdjust="spacingAndGlyphs">GA2</text>
<text x="1762.2" y="1601.5" font-size="18.17" fill="#262626" textLength="100.3" lengthAdjust="spacingAndGlyphs">(74 - 86%)</text>
<text x="2109.9" y="1603.5" font-size="24.71" fill="#222" textLength="216.5" lengthAdjust="spacingAndGlyphs">4:25/km - 5:06/km</text>
<text x="1705.0" y="1639.0" font-size="23.26" fill="#1c1c1c" font-weight="bold" textLength="55.0" lengthAdjust="spacingAndGlyphs">WSA</text>
<text x="1769.0" y="1637.5" font-size="18.17" fill="#262626" textLength="93.5" lengthAdjust="spacingAndGlyphs">(86 - ...%)</text>
<text x="2188.5" y="1639.5" font-size="24.71" fill="#222" textLength="137.9" lengthAdjust="spacingAndGlyphs">... - 4:25/km</text>
<rect x="360.0" y="271.0" width="1644.0" height="982.0" fill="#000"/>
<rect x="362.0" y="273.0" width="1640.0" height="978.0" fill="#ffffff"/>
<rect x="363.0" y="274.0" width="1638.0" height="57.0" fill="#eff0f2"/>
<rect x="363.0" y="331.0" width="1638.0" height="919.0" fill="#f5f5f5"/>
<line x1="363.0" y1="330.5" x2="2001.0" y2="330.5" stroke="#c4c4c4" stroke-width="2.0"/>
<line x1="1643.6" y1="274.0" x2="1643.6" y2="330.0" stroke="#c8c8c8" stroke-width="2.0"/>
<line x1="1750.0" y1="274.0" x2="1750.0" y2="330.0" stroke="#c8c8c8" stroke-width="2.0"/>
<text x="373.2" y="308.5" font-size="21.95" fill="#2b5566" font-weight="bold" textLength="68.2" lengthAdjust="spacingAndGlyphs">FORM</text>
<text x="1665.0" y="309.0" font-size="22.53" fill="#444" textLength="43.0" lengthAdjust="spacingAndGlyphs">TSB</text>
<polyline points="1714.2,298.1 1720.0,303.9 1725.8,298.1" fill="none" stroke="#444" stroke-width="3.2" stroke-linecap="round" stroke-linejoin="round"/>
<text x="1771.0" y="309.0" font-size="22.53" fill="#444" textLength="190.0" lengthAdjust="spacingAndGlyphs">Letzten 6 Monate</text>
<polyline points="1968.2,298.0 1974.2,304.0 1980.3,298.0" fill="none" stroke="#444" stroke-width="3.2" stroke-linecap="round" stroke-linejoin="round"/>
<rect x="434.0" y="353.0" width="1178.5" height="28.0" fill="#fafafa"/>
<rect x="439.2" y="354" width="33.2" height="26" fill="#4f8b34" stroke="#cfcfcf" stroke-width="2.5"/>
<text x="483.0" y="375.5" font-size="21.95" fill="#333" textLength="176.0" lengthAdjust="spacingAndGlyphs">Fitnessgrad (CTL)</text>
<rect x="675.4" y="354" width="33.2" height="26" fill="#8f2a3a" stroke="#cfcfcf" stroke-width="2.5"/>
<text x="718.0" y="375.5" font-size="21.95" fill="#333" textLength="159.0" lengthAdjust="spacingAndGlyphs">Müdigkeit (ATL)</text>
<rect x="895.1" y="354" width="31.0" height="26" fill="#000000" stroke="#cfcfcf" stroke-width="2.5"/>
<text x="936.0" y="375.5" font-size="21.95" fill="#333" textLength="201.9" lengthAdjust="spacingAndGlyphs">durchschn. VO2max</text>
<rect x="1153.2" y="354" width="33.1" height="26" fill="#2b5362" stroke="#cfcfcf" stroke-width="2.5"/>
<text x="1196.0" y="375.5" font-size="21.95" fill="#333" textLength="63.0" lengthAdjust="spacingAndGlyphs">TRIMP</text>
<rect x="1275.7" y="354" width="32.6" height="26" fill="#424242" stroke="#cfcfcf" stroke-width="2.5"/>
<text x="1318.0" y="375.5" font-size="21.95" fill="#333" textLength="84.5" lengthAdjust="spacingAndGlyphs">VO2max</text>
<rect x="1418.6" y="354" width="32.9" height="26" fill="#cc9966" stroke="#cfcfcf" stroke-width="2.5"/>
<text x="1461.8" y="375.5" font-size="21.95" fill="#333" textLength="140.3" lengthAdjust="spacingAndGlyphs">Marathonform</text>
<rect x="433" y="403" width="1316" height="806" fill="#fbfbfb"/>
<line x1="433" x2="1749" y1="1208.5" y2="1208.5" stroke="#dcdcdc" stroke-width="1.6"/>
<line x1="433" x2="1749" y1="1047.5" y2="1047.5" stroke="#dcdcdc" stroke-width="1.6"/>
<line x1="433" x2="1749" y1="886.5" y2="886.5" stroke="#dcdcdc" stroke-width="1.6"/>
<line x1="433" x2="1749" y1="725.5" y2="725.5" stroke="#dcdcdc" stroke-width="1.6"/>
<line x1="433" x2="1749" y1="564.5" y2="564.5" stroke="#dcdcdc" stroke-width="1.6"/>
<line x1="433" x2="1749" y1="403.5" y2="403.5" stroke="#dcdcdc" stroke-width="1.6"/>
<line x1="562.5" x2="562.5" y1="403" y2="1209" stroke="#dcdcdc" stroke-width="1.6"/>
<line x1="755.6" x2="755.6" y1="403" y2="1209" stroke="#dcdcdc" stroke-width="1.6"/>
<line x1="931.7" x2="931.7" y1="403" y2="1209" stroke="#dcdcdc" stroke-width="1.6"/>
<line x1="1125.1" x2="1125.1" y1="403" y2="1209" stroke="#dcdcdc" stroke-width="1.6"/>
<line x1="1313.0" x2="1313.0" y1="403" y2="1209" stroke="#dcdcdc" stroke-width="1.6"/>
<line x1="1507.2" x2="1507.2" y1="403" y2="1209" stroke="#dcdcdc" stroke-width="1.6"/>
<line x1="1695.2" x2="1695.2" y1="403" y2="1209" stroke="#dcdcdc" stroke-width="1.6"/>
<path d="M1557.8,748.0 C1558.6,749.8 1561.1,754.5 1562.7,758.7 C1564.3,762.9 1566.0,768.5 1567.6,773.4 C1569.2,778.2 1570.9,783.0 1572.5,787.8 C1574.1,792.5 1575.7,797.2 1577.3,801.9 C1578.9,806.6 1580.6,811.2 1582.2,815.8 C1583.8,820.4 1585.5,824.8 1587.1,829.3 C1588.7,833.8 1590.4,838.1 1592.0,842.5 C1593.6,846.9 1595.3,851.1 1596.9,855.4 C1598.5,859.6 1600.2,863.9 1601.8,868.0 C1603.4,872.1 1605.1,876.2 1606.7,880.3 C1608.3,884.3 1610.0,888.3 1611.6,892.3 C1613.2,896.2 1614.8,900.1 1616.4,904.0 C1618.0,907.9 1619.7,911.6 1621.3,915.4 C1622.9,919.1 1624.6,922.9 1626.2,926.5 C1627.8,930.1 1629.5,933.7 1631.1,937.2 C1632.7,940.7 1634.4,944.3 1636.0,947.7 C1637.6,951.1 1639.3,954.5 1640.9,957.8 C1642.5,961.1 1644.2,964.4 1645.8,967.6 C1647.4,970.8 1649.1,974.0 1650.7,977.1 C1652.3,980.2 1653.9,983.3 1655.5,986.3 C1657.1,989.3 1658.8,992.3 1660.4,995.2 C1662.0,998.1 1663.7,1000.9 1665.3,1003.7 C1666.9,1006.5 1668.6,1009.2 1670.2,1011.9 C1671.8,1014.6 1673.5,1017.2 1675.1,1019.8 C1676.7,1022.4 1678.4,1024.8 1680.0,1027.3 C1681.6,1029.8 1683.3,1032.2 1684.9,1034.6 C1686.5,1037.0 1688.2,1039.3 1689.8,1041.5 C1691.4,1043.7 1693.0,1045.9 1694.6,1048.0 C1696.2,1050.1 1697.9,1052.3 1699.5,1054.3 C1701.1,1056.3 1702.8,1058.3 1704.4,1060.2 C1706.0,1062.1 1707.7,1063.9 1709.3,1065.7 C1710.9,1067.5 1712.6,1069.3 1714.2,1071.0 C1715.8,1072.7 1717.5,1074.2 1719.1,1075.8 C1720.7,1077.4 1722.4,1078.9 1724.0,1080.4 C1725.6,1081.9 1727.3,1083.2 1728.9,1084.6 C1730.5,1085.9 1732.1,1087.3 1733.7,1088.5 C1735.3,1089.7 1737.0,1090.9 1738.6,1092.0 C1740.2,1093.1 1741.9,1094.1 1743.5,1095.1 C1745.1,1096.1 1747.6,1097.4 1748.4,1097.9 L1748.4,1208.5 L1557.8,1208.5 Z" fill="#4a8a2a" fill-opacity="0.5"/>
<path d="M1557.8,748.0 C1558.6,749.8 1561.1,754.5 1562.7,758.7 C1564.3,762.9 1566.0,768.5 1567.6,773.4 C1569.2,778.2 1570.9,783.0 1572.5,787.8 C1574.1,792.5 1575.7,797.2 1577.3,801.9 C1578.9,806.6 1580.6,811.2 1582.2,815.8 C1583.8,820.4 1585.5,824.8 1587.1,829.3 C1588.7,833.8 1590.4,838.1 1592.0,842.5 C1593.6,846.9 1595.3,851.1 1596.9,855.4 C1598.5,859.6 1600.2,863.9 1601.8,868.0 C1603.4,872.1 1605.1,876.2 1606.7,880.3 C1608.3,884.3 1610.0,888.3 1611.6,892.3 C1613.2,896.2 1614.8,900.1 1616.4,904.0 C1618.0,907.9 1619.7,911.6 1621.3,915.4 C1622.9,919.1 1624.6,922.9 1626.2,926.5 C1627.8,930.1 1629.5,933.7 1631.1,937.2 C1632.7,940.7 1634.4,944.3 1636.0,947.7 C1637.6,951.1 1639.3,954.5 1640.9,957.8 C1642.5,961.1 1644.2,964.4 1645.8,967.6 C1647.4,970.8 1649.1,974.0 1650.7,977.1 C1652.3,980.2 1653.9,983.3 1655.5,986.3 C1657.1,989.3 1658.8,992.3 1660.4,995.2 C1662.0,998.1 1663.7,1000.9 1665.3,1003.7 C1666.9,1006.5 1668.6,1009.2 1670.2,1011.9 C1671.8,1014.6 1673.5,1017.2 1675.1,1019.8 C1676.7,1022.4 1678.4,1024.8 1680.0,1027.3 C1681.6,1029.8 1683.3,1032.2 1684.9,1034.6 C1686.5,1037.0 1688.2,1039.3 1689.8,1041.5 C1691.4,1043.7 1693.0,1045.9 1694.6,1048.0 C1696.2,1050.1 1697.9,1052.3 1699.5,1054.3 C1701.1,1056.3 1702.8,1058.3 1704.4,1060.2 C1706.0,1062.1 1707.7,1063.9 1709.3,1065.7 C1710.9,1067.5 1712.6,1069.3 1714.2,1071.0 C1715.8,1072.7 1717.5,1074.2 1719.1,1075.8 C1720.7,1077.4 1722.4,1078.9 1724.0,1080.4 C1725.6,1081.9 1727.3,1083.2 1728.9,1084.6 C1730.5,1085.9 1732.1,1087.3 1733.7,1088.5 C1735.3,1089.7 1737.0,1090.9 1738.6,1092.0 C1740.2,1093.1 1741.9,1094.1 1743.5,1095.1 C1745.1,1096.1 1747.6,1097.4 1748.4,1097.9" fill="none" stroke="#4e8c2c" stroke-opacity="0.7" stroke-width="1.6"/>
<path d="M433.0,1208.5 L433.0,900.0 440.0,902.3 446.7,892.9 453.4,892.9 460.0,897.4 468.9,901.1 477.8,912.3 484.5,913.4 494.5,910.0 501.2,907.8 506.7,899.6 514.5,902.3 521.2,887.8 527.9,884.9 534.5,880.5 540.1,886.2 546.8,870.0 553.4,881.1 560.1,877.3 564.6,887.8 569.0,896.7 577.9,903.4 585.7,906.7 592.4,910.0 597.9,910.0 602.4,900.0 609.0,888.5 615.7,893.4 622.4,894.5 630.2,902.3 634.6,906.7 640.2,897.8 646.9,886.7 653.5,880.0 660.2,886.2 666.9,893.4 675.8,898.9 683.6,898.9 690.2,883.4 696.9,888.9 703.6,893.4 709.1,887.8 715.8,893.4 722.5,898.9 728.0,895.6 734.7,881.1 741.4,886.7 748.1,884.0 754.7,895.6 760.0,902.0 766.0,914.4 772.1,902.4 778.1,908.4 784.1,913.2 791.4,922.9 797.4,934.2 803.4,918.8 809.5,918.8 815.5,912.0 821.5,909.6 828.3,900.0 834.8,904.8 840.8,914.4 846.9,909.1 852.9,913.2 858.9,908.4 865.7,909.6 872.2,880.7 878.2,885.0 884.2,892.7 891.5,898.8 897.5,912.0 903.5,909.6 909.6,919.3 916.3,897.6 922.8,904.8 928.9,912.0 934.9,909.6 940.9,916.9 947.0,915.6 953.0,920.5 960.2,930.8 966.3,931.3 972.3,941.0 979.5,949.4 986.8,957.9 991.6,961.5 997.6,971.1 1003.7,977.2 1009.7,982.5 1015.7,982.5 1021.8,957.9 1028.3,953.0 1034.5,955.0 1040.3,931.3 1047.1,935.0 1053.1,936.2 1060.4,935.0 1066.4,933.3 1072.4,936.2 1078.9,930.1 1090.0,948.2 1101.7,941.7 1109.5,908.7 1116.0,909.2 1123.8,904.0 1129.0,900.1 1134.7,878.0 1142.0,889.7 1147.2,897.5 1153.7,894.1 1159.7,900.1 1165.4,875.4 1173.2,869.7 1184.9,833.3 1191.4,840.3 1197.1,822.1 1209.6,836.4 1216.1,838.5 1222.6,853.3 1227.8,855.9 1234.3,844.2 1240.8,826.0 1253.8,814.3 1266.2,767.1 1272.5,777.1 1278.5,765.8 1285.0,773.8 1291.8,775.3 1297.5,788.0 1303.0,763.3 1310.1,753.3 1319.3,770.3 1330.6,790.9 1340.6,808.4 1347.6,728.2 1354.4,748.3 1362.7,775.8 1372.7,788.4 1378.7,777.1 1385.2,787.1 1397.8,737.0 1407.0,759.5 1420.0,779.0 1435.0,810.4 1441.3,758.3 1447.6,777.1 1453.8,781.4 1460.1,773.3 1466.4,777.1 1472.6,783.9 1478.9,778.3 1485.2,753.3 1491.4,737.7 1497.7,752.0 1504.0,743.3 1510.2,737.0 1516.5,722.0 1522.8,700.6 1529.0,689.4 1535.3,708.2 1539.5,725.0 1547.0,724.4 1557.8,748.0 L1557.8,1208.5 Z" fill="#4a8a2a" fill-opacity="0.7"/>
<polyline points="433.0,900.0 440.0,902.3 446.7,892.9 453.4,892.9 460.0,897.4 468.9,901.1 477.8,912.3 484.5,913.4 494.5,910.0 501.2,907.8 506.7,899.6 514.5,902.3 521.2,887.8 527.9,884.9 534.5,880.5 540.1,886.2 546.8,870.0 553.4,881.1 560.1,877.3 564.6,887.8 569.0,896.7 577.9,903.4 585.7,906.7 592.4,910.0 597.9,910.0 602.4,900.0 609.0,888.5 615.7,893.4 622.4,894.5 630.2,902.3 634.6,906.7 640.2,897.8 646.9,886.7 653.5,880.0 660.2,886.2 666.9,893.4 675.8,898.9 683.6,898.9 690.2,883.4 696.9,888.9 703.6,893.4 709.1,887.8 715.8,893.4 722.5,898.9 728.0,895.6 734.7,881.1 741.4,886.7 748.1,884.0 754.7,895.6 760.0,902.0 766.0,914.4 772.1,902.4 778.1,908.4 784.1,913.2 791.4,922.9 797.4,934.2 803.4,918.8 809.5,918.8 815.5,912.0 821.5,909.6 828.3,900.0 834.8,904.8 840.8,914.4 846.9,909.1 852.9,913.2 858.9,908.4 865.7,909.6 872.2,880.7 878.2,885.0 884.2,892.7 891.5,898.8 897.5,912.0 903.5,909.6 909.6,919.3 916.3,897.6 922.8,904.8 928.9,912.0 934.9,909.6 940.9,916.9 947.0,915.6 953.0,920.5 960.2,930.8 966.3,931.3 972.3,941.0 979.5,949.4 986.8,957.9 991.6,961.5 997.6,971.1 1003.7,977.2 1009.7,982.5 1015.7,982.5 1021.8,957.9 1028.3,953.0 1034.5,955.0 1040.3,931.3 1047.1,935.0 1053.1,936.2 1060.4,935.0 1066.4,933.3 1072.4,936.2 1078.9,930.1 1090.0,948.2 1101.7,941.7 1109.5,908.7 1116.0,909.2 1123.8,904.0 1129.0,900.1 1134.7,878.0 1142.0,889.7 1147.2,897.5 1153.7,894.1 1159.7,900.1 1165.4,875.4 1173.2,869.7 1184.9,833.3 1191.4,840.3 1197.1,822.1 1209.6,836.4 1216.1,838.5 1222.6,853.3 1227.8,855.9 1234.3,844.2 1240.8,826.0 1253.8,814.3 1266.2,767.1 1272.5,777.1 1278.5,765.8 1285.0,773.8 1291.8,775.3 1297.5,788.0 1303.0,763.3 1310.1,753.3 1319.3,770.3 1330.6,790.9 1340.6,808.4 1347.6,728.2 1354.4,748.3 1362.7,775.8 1372.7,788.4 1378.7,777.1 1385.2,787.1 1397.8,737.0 1407.0,759.5 1420.0,779.0 1435.0,810.4 1441.3,758.3 1447.6,777.1 1453.8,781.4 1460.1,773.3 1466.4,777.1 1472.6,783.9 1478.9,778.3 1485.2,753.3 1491.4,737.7 1497.7,752.0 1504.0,743.3 1510.2,737.0 1516.5,722.0 1522.8,700.6 1529.0,689.4 1535.3,708.2 1539.5,725.0 1547.0,724.4 1557.8,748.0" fill="none" stroke="#000" stroke-opacity="0.08" stroke-width="5.0" transform="translate(1,2)" stroke-linejoin="round"/><polyline points="433.0,900.0 440.0,902.3 446.7,892.9 453.4,892.9 460.0,897.4 468.9,901.1 477.8,912.3 484.5,913.4 494.5,910.0 501.2,907.8 506.7,899.6 514.5,902.3 521.2,887.8 527.9,884.9 534.5,880.5 540.1,886.2 546.8,870.0 553.4,881.1 560.1,877.3 564.6,887.8 569.0,896.7 577.9,903.4 585.7,906.7 592.4,910.0 597.9,910.0 602.4,900.0 609.0,888.5 615.7,893.4 622.4,894.5 630.2,902.3 634.6,906.7 640.2,897.8 646.9,886.7 653.5,880.0 660.2,886.2 666.9,893.4 675.8,898.9 683.6,898.9 690.2,883.4 696.9,888.9 703.6,893.4 709.1,887.8 715.8,893.4 722.5,898.9 728.0,895.6 734.7,881.1 741.4,886.7 748.1,884.0 754.7,895.6 760.0,902.0 766.0,914.4 772.1,902.4 778.1,908.4 784.1,913.2 791.4,922.9 797.4,934.2 803.4,918.8 809.5,918.8 815.5,912.0 821.5,909.6 828.3,900.0 834.8,904.8 840.8,914.4 846.9,909.1 852.9,913.2 858.9,908.4 865.7,909.6 872.2,880.7 878.2,885.0 884.2,892.7 891.5,898.8 897.5,912.0 903.5,909.6 909.6,919.3 916.3,897.6 922.8,904.8 928.9,912.0 934.9,909.6 940.9,916.9 947.0,915.6 953.0,920.5 960.2,930.8 966.3,931.3 972.3,941.0 979.5,949.4 986.8,957.9 991.6,961.5 997.6,971.1 1003.7,977.2 1009.7,982.5 1015.7,982.5 1021.8,957.9 1028.3,953.0 1034.5,955.0 1040.3,931.3 1047.1,935.0 1053.1,936.2 1060.4,935.0 1066.4,933.3 1072.4,936.2 1078.9,930.1 1090.0,948.2 1101.7,941.7 1109.5,908.7 1116.0,909.2 1123.8,904.0 1129.0,900.1 1134.7,878.0 1142.0,889.7 1147.2,897.5 1153.7,894.1 1159.7,900.1 1165.4,875.4 1173.2,869.7 1184.9,833.3 1191.4,840.3 1197.1,822.1 1209.6,836.4 1216.1,838.5 1222.6,853.3 1227.8,855.9 1234.3,844.2 1240.8,826.0 1253.8,814.3 1266.2,767.1 1272.5,777.1 1278.5,765.8 1285.0,773.8 1291.8,775.3 1297.5,788.0 1303.0,763.3 1310.1,753.3 1319.3,770.3 1330.6,790.9 1340.6,808.4 1347.6,728.2 1354.4,748.3 1362.7,775.8 1372.7,788.4 1378.7,777.1 1385.2,787.1 1397.8,737.0 1407.0,759.5 1420.0,779.0 1435.0,810.4 1441.3,758.3 1447.6,777.1 1453.8,781.4 1460.1,773.3 1466.4,777.1 1472.6,783.9 1478.9,778.3 1485.2,753.3 1491.4,737.7 1497.7,752.0 1504.0,743.3 1510.2,737.0 1516.5,722.0 1522.8,700.6 1529.0,689.4 1535.3,708.2 1539.5,725.0 1547.0,724.4 1557.8,748.0" fill="none" stroke="#4e8c2c" stroke-opacity="1.00" stroke-width="2.0" stroke-linejoin="round"/>
<path d="M1557.8,888.0 C1558.3,892.5 1559.9,903.3 1561.0,915.0 C1562.1,926.7 1562.6,940.1 1564.5,958.0 C1566.4,975.9 1569.6,1002.2 1572.6,1022.6 C1575.6,1043.0 1578.5,1062.9 1582.3,1080.6 C1586.1,1098.3 1590.9,1115.5 1595.2,1129.0 C1599.5,1142.5 1603.2,1151.6 1608.0,1161.3 C1612.8,1171.0 1617.7,1180.3 1624.2,1187.0 C1630.7,1193.7 1637.7,1198.1 1646.8,1201.6 C1655.9,1205.1 1662.1,1206.8 1679.0,1208.0 C1695.9,1209.2 1736.8,1208.8 1748.4,1209.0 L1748.4,1208.5 L1557.8,1208.5 Z" fill="#ab2154" fill-opacity="0.21"/>
<path d="M1557.8,888.0 C1558.3,892.5 1559.9,903.3 1561.0,915.0 C1562.1,926.7 1562.6,940.1 1564.5,958.0 C1566.4,975.9 1569.6,1002.2 1572.6,1022.6 C1575.6,1043.0 1578.5,1062.9 1582.3,1080.6 C1586.1,1098.3 1590.9,1115.5 1595.2,1129.0 C1599.5,1142.5 1603.2,1151.6 1608.0,1161.3 C1612.8,1171.0 1617.7,1180.3 1624.2,1187.0 C1630.7,1193.7 1637.7,1198.1 1646.8,1201.6 C1655.9,1205.1 1662.1,1206.8 1679.0,1208.0 C1695.9,1209.2 1736.8,1208.8 1748.4,1209.0" fill="none" stroke="#b04a62" stroke-opacity="0.9" stroke-width="2.4"/>
<path d="M433.0,1208.5 L433.0,866.0 440.2,893.4 446.6,835.9 452.4,850.8 458.9,892.3 465.6,897.8 471.1,910.0 477.8,969.0 484.5,963.4 501.2,907.8 509.2,862.5 515.4,893.0 521.2,809.7 527.6,814.0 534.4,806.0 540.4,860.4 546.1,774.1 553.1,855.0 559.3,847.2 562.3,875.6 571.2,970.1 579.0,969.4 590.1,971.9 596.8,957.9 609.4,830.6 615.5,876.0 622.4,891.1 634.2,952.3 653.0,801.2 659.5,865.0 671.3,920.0 678.0,929.0 683.6,922.3 690.5,828.9 697.0,884.0 703.0,893.0 709.1,865.6 715.8,895.6 721.4,931.6 729.2,880.0 734.2,818.8 740.5,878.0 747.0,861.0 760.0,955.0 766.0,1017.0 772.1,918.1 778.1,961.5 784.1,965.1 790.2,988.0 796.9,1046.4 802.9,928.9 809.5,927.0 815.5,896.3 821.5,891.5 828.5,834.0 834.8,887.9 840.8,951.1 846.9,895.1 852.9,930.1 859.4,889.1 865.4,921.7 871.9,745.5 878.2,815.0 884.2,884.3 891.5,900.0 897.0,976.0 903.5,939.8 909.6,988.0 916.3,851.7 922.1,896.3 928.4,945.8 934.2,919.3 940.9,961.5 947.0,940.5 953.0,961.5 959.8,1003.7 966.3,987.3 972.3,1037.5 978.3,1054.4 984.9,1065.2 991.1,1044.7 996.9,1085.2 1003.2,1086.9 1010.4,1094.2 1015.7,1070.0 1022.5,920.5 1028.3,887.9 1034.5,927.0 1041.0,796.7 1047.1,861.4 1053.9,881.9 1060.4,889.1 1066.4,890.3 1072.4,920.5 1078.5,885.0 1085.7,955.5 1091.0,995.0 1103.0,940.4 1109.5,760.3 1115.8,805.9 1122.1,819.0 1128.3,810.4 1134.6,704.4 1147.2,878.0 1153.7,865.0 1159.7,910.5 1165.7,774.6 1172.2,774.6 1184.7,620.5 1191.0,724.5 1197.3,643.5 1209.8,789.6 1216.1,810.9 1222.6,902.7 1227.8,905.3 1240.9,736.5 1247.4,725.7 1253.7,720.2 1266.2,534.7 1272.5,646.8 1278.5,614.9 1285.0,701.9 1291.3,723.2 1297.5,805.9 1303.5,661.8 1310.1,640.5 1316.3,725.0 1325.6,840.0 1334.4,900.1 1340.9,931.3 1347.6,465.1 1353.7,583.0 1365.6,845.5 1372.1,872.8 1378.7,783.4 1385.2,836.0 1397.8,584.1 1403.8,723.2 1420.0,850.0 1434.3,958.6 1441.3,634.2 1447.6,768.3 1453.8,804.7 1460.1,745.8 1466.4,773.3 1472.6,812.2 1478.9,778.3 1491.4,580.9 1497.7,701.9 1504.0,655.0 1516.5,579.1 1522.8,484.6 1529.0,504.7 1535.3,690.0 1541.0,755.0 1547.8,740.5 1557.8,888.0 L1557.8,1208.5 Z" fill="#852136" fill-opacity="0.39"/>
<polyline points="433.0,866.0 440.2,893.4 446.6,835.9 452.4,850.8 458.9,892.3 465.6,897.8 471.1,910.0 477.8,969.0 484.5,963.4 501.2,907.8 509.2,862.5 515.4,893.0 521.2,809.7 527.6,814.0 534.4,806.0 540.4,860.4 546.1,774.1 553.1,855.0 559.3,847.2 562.3,875.6 571.2,970.1 579.0,969.4 590.1,971.9 596.8,957.9 609.4,830.6 615.5,876.0 622.4,891.1 634.2,952.3 653.0,801.2 659.5,865.0 671.3,920.0 678.0,929.0 683.6,922.3 690.5,828.9 697.0,884.0 703.0,893.0 709.1,865.6 715.8,895.6 721.4,931.6 729.2,880.0 734.2,818.8 740.5,878.0 747.0,861.0 760.0,955.0 766.0,1017.0 772.1,918.1 778.1,961.5 784.1,965.1 790.2,988.0 796.9,1046.4 802.9,928.9 809.5,927.0 815.5,896.3 821.5,891.5 828.5,834.0 834.8,887.9 840.8,951.1 846.9,895.1 852.9,930.1 859.4,889.1 865.4,921.7 871.9,745.5 878.2,815.0 884.2,884.3 891.5,900.0 897.0,976.0 903.5,939.8 909.6,988.0 916.3,851.7 922.1,896.3 928.4,945.8 934.2,919.3 940.9,961.5 947.0,940.5 953.0,961.5 959.8,1003.7 966.3,987.3 972.3,1037.5 978.3,1054.4 984.9,1065.2 991.1,1044.7 996.9,1085.2 1003.2,1086.9 1010.4,1094.2 1015.7,1070.0 1022.5,920.5 1028.3,887.9 1034.5,927.0 1041.0,796.7 1047.1,861.4 1053.9,881.9 1060.4,889.1 1066.4,890.3 1072.4,920.5 1078.5,885.0 1085.7,955.5 1091.0,995.0 1103.0,940.4 1109.5,760.3 1115.8,805.9 1122.1,819.0 1128.3,810.4 1134.6,704.4 1147.2,878.0 1153.7,865.0 1159.7,910.5 1165.7,774.6 1172.2,774.6 1184.7,620.5 1191.0,724.5 1197.3,643.5 1209.8,789.6 1216.1,810.9 1222.6,902.7 1227.8,905.3 1240.9,736.5 1247.4,725.7 1253.7,720.2 1266.2,534.7 1272.5,646.8 1278.5,614.9 1285.0,701.9 1291.3,723.2 1297.5,805.9 1303.5,661.8 1310.1,640.5 1316.3,725.0 1325.6,840.0 1334.4,900.1 1340.9,931.3 1347.6,465.1 1353.7,583.0 1365.6,845.5 1372.1,872.8 1378.7,783.4 1385.2,836.0 1397.8,584.1 1403.8,723.2 1420.0,850.0 1434.3,958.6 1441.3,634.2 1447.6,768.3 1453.8,804.7 1460.1,745.8 1466.4,773.3 1472.6,812.2 1478.9,778.3 1491.4,580.9 1497.7,701.9 1504.0,655.0 1516.5,579.1 1522.8,484.6 1529.0,504.7 1535.3,690.0 1541.0,755.0 1547.8,740.5 1557.8,888.0" fill="none" stroke="#000" stroke-opacity="0.08" stroke-width="5.1" transform="translate(1,2)" stroke-linejoin="round"/><polyline points="433.0,866.0 440.2,893.4 446.6,835.9 452.4,850.8 458.9,892.3 465.6,897.8 471.1,910.0 477.8,969.0 484.5,963.4 501.2,907.8 509.2,862.5 515.4,893.0 521.2,809.7 527.6,814.0 534.4,806.0 540.4,860.4 546.1,774.1 553.1,855.0 559.3,847.2 562.3,875.6 571.2,970.1 579.0,969.4 590.1,971.9 596.8,957.9 609.4,830.6 615.5,876.0 622.4,891.1 634.2,952.3 653.0,801.2 659.5,865.0 671.3,920.0 678.0,929.0 683.6,922.3 690.5,828.9 697.0,884.0 703.0,893.0 709.1,865.6 715.8,895.6 721.4,931.6 729.2,880.0 734.2,818.8 740.5,878.0 747.0,861.0 760.0,955.0 766.0,1017.0 772.1,918.1 778.1,961.5 784.1,965.1 790.2,988.0 796.9,1046.4 802.9,928.9 809.5,927.0 815.5,896.3 821.5,891.5 828.5,834.0 834.8,887.9 840.8,951.1 846.9,895.1 852.9,930.1 859.4,889.1 865.4,921.7 871.9,745.5 878.2,815.0 884.2,884.3 891.5,900.0 897.0,976.0 903.5,939.8 909.6,988.0 916.3,851.7 922.1,896.3 928.4,945.8 934.2,919.3 940.9,961.5 947.0,940.5 953.0,961.5 959.8,1003.7 966.3,987.3 972.3,1037.5 978.3,1054.4 984.9,1065.2 991.1,1044.7 996.9,1085.2 1003.2,1086.9 1010.4,1094.2 1015.7,1070.0 1022.5,920.5 1028.3,887.9 1034.5,927.0 1041.0,796.7 1047.1,861.4 1053.9,881.9 1060.4,889.1 1066.4,890.3 1072.4,920.5 1078.5,885.0 1085.7,955.5 1091.0,995.0 1103.0,940.4 1109.5,760.3 1115.8,805.9 1122.1,819.0 1128.3,810.4 1134.6,704.4 1147.2,878.0 1153.7,865.0 1159.7,910.5 1165.7,774.6 1172.2,774.6 1184.7,620.5 1191.0,724.5 1197.3,643.5 1209.8,789.6 1216.1,810.9 1222.6,902.7 1227.8,905.3 1240.9,736.5 1247.4,725.7 1253.7,720.2 1266.2,534.7 1272.5,646.8 1278.5,614.9 1285.0,701.9 1291.3,723.2 1297.5,805.9 1303.5,661.8 1310.1,640.5 1316.3,725.0 1325.6,840.0 1334.4,900.1 1340.9,931.3 1347.6,465.1 1353.7,583.0 1365.6,845.5 1372.1,872.8 1378.7,783.4 1385.2,836.0 1397.8,584.1 1403.8,723.2 1420.0,850.0 1434.3,958.6 1441.3,634.2 1447.6,768.3 1453.8,804.7 1460.1,745.8 1466.4,773.3 1472.6,812.2 1478.9,778.3 1491.4,580.9 1497.7,701.9 1504.0,655.0 1516.5,579.1 1522.8,484.6 1529.0,504.7 1535.3,690.0 1541.0,755.0 1547.8,740.5 1557.8,888.0" fill="none" stroke="#8f2136" stroke-opacity="1.00" stroke-width="2.1" stroke-linejoin="round"/>
<defs><clipPath id="areaclip"><path d="M433.0,1208.5 L433.0,900.0 440.0,902.3 446.7,892.9 453.4,892.9 460.0,897.4 468.9,901.1 477.8,912.3 484.5,913.4 494.5,910.0 501.2,907.8 506.7,899.6 514.5,902.3 521.2,887.8 527.9,884.9 534.5,880.5 540.1,886.2 546.8,870.0 553.4,881.1 560.1,877.3 564.6,887.8 569.0,896.7 577.9,903.4 585.7,906.7 592.4,910.0 597.9,910.0 602.4,900.0 609.0,888.5 615.7,893.4 622.4,894.5 630.2,902.3 634.6,906.7 640.2,897.8 646.9,886.7 653.5,880.0 660.2,886.2 666.9,893.4 675.8,898.9 683.6,898.9 690.2,883.4 696.9,888.9 703.6,893.4 709.1,887.8 715.8,893.4 722.5,898.9 728.0,895.6 734.7,881.1 741.4,886.7 748.1,884.0 754.7,895.6 760.0,902.0 766.0,914.4 772.1,902.4 778.1,908.4 784.1,913.2 791.4,922.9 797.4,934.2 803.4,918.8 809.5,918.8 815.5,912.0 821.5,909.6 828.3,900.0 834.8,904.8 840.8,914.4 846.9,909.1 852.9,913.2 858.9,908.4 865.7,909.6 872.2,880.7 878.2,885.0 884.2,892.7 891.5,898.8 897.5,912.0 903.5,909.6 909.6,919.3 916.3,897.6 922.8,904.8 928.9,912.0 934.9,909.6 940.9,916.9 947.0,915.6 953.0,920.5 960.2,930.8 966.3,931.3 972.3,941.0 979.5,949.4 986.8,957.9 991.6,961.5 997.6,971.1 1003.7,977.2 1009.7,982.5 1015.7,982.5 1021.8,957.9 1028.3,953.0 1034.5,955.0 1040.3,931.3 1047.1,935.0 1053.1,936.2 1060.4,935.0 1066.4,933.3 1072.4,936.2 1078.9,930.1 1090.0,948.2 1101.7,941.7 1109.5,908.7 1116.0,909.2 1123.8,904.0 1129.0,900.1 1134.7,878.0 1142.0,889.7 1147.2,897.5 1153.7,894.1 1159.7,900.1 1165.4,875.4 1173.2,869.7 1184.9,833.3 1191.4,840.3 1197.1,822.1 1209.6,836.4 1216.1,838.5 1222.6,853.3 1227.8,855.9 1234.3,844.2 1240.8,826.0 1253.8,814.3 1266.2,767.1 1272.5,777.1 1278.5,765.8 1285.0,773.8 1291.8,775.3 1297.5,788.0 1303.0,763.3 1310.1,753.3 1319.3,770.3 1330.6,790.9 1340.6,808.4 1347.6,728.2 1354.4,748.3 1362.7,775.8 1372.7,788.4 1378.7,777.1 1385.2,787.1 1397.8,737.0 1407.0,759.5 1420.0,779.0 1435.0,810.4 1441.3,758.3 1447.6,777.1 1453.8,781.4 1460.1,773.3 1466.4,777.1 1472.6,783.9 1478.9,778.3 1485.2,753.3 1491.4,737.7 1497.7,752.0 1504.0,743.3 1510.2,737.0 1516.5,722.0 1522.8,700.6 1529.0,689.4 1535.3,708.2 1539.5,725.0 1547.0,724.4 1557.8,748.0 L1557.8,1208.5 Z"/><path d="M433.0,1208.5 L433.0,866.0 440.2,893.4 446.6,835.9 452.4,850.8 458.9,892.3 465.6,897.8 471.1,910.0 477.8,969.0 484.5,963.4 501.2,907.8 509.2,862.5 515.4,893.0 521.2,809.7 527.6,814.0 534.4,806.0 540.4,860.4 546.1,774.1 553.1,855.0 559.3,847.2 562.3,875.6 571.2,970.1 579.0,969.4 590.1,971.9 596.8,957.9 609.4,830.6 615.5,876.0 622.4,891.1 634.2,952.3 653.0,801.2 659.5,865.0 671.3,920.0 678.0,929.0 683.6,922.3 690.5,828.9 697.0,884.0 703.0,893.0 709.1,865.6 715.8,895.6 721.4,931.6 729.2,880.0 734.2,818.8 740.5,878.0 747.0,861.0 760.0,955.0 766.0,1017.0 772.1,918.1 778.1,961.5 784.1,965.1 790.2,988.0 796.9,1046.4 802.9,928.9 809.5,927.0 815.5,896.3 821.5,891.5 828.5,834.0 834.8,887.9 840.8,951.1 846.9,895.1 852.9,930.1 859.4,889.1 865.4,921.7 871.9,745.5 878.2,815.0 884.2,884.3 891.5,900.0 897.0,976.0 903.5,939.8 909.6,988.0 916.3,851.7 922.1,896.3 928.4,945.8 934.2,919.3 940.9,961.5 947.0,940.5 953.0,961.5 959.8,1003.7 966.3,987.3 972.3,1037.5 978.3,1054.4 984.9,1065.2 991.1,1044.7 996.9,1085.2 1003.2,1086.9 1010.4,1094.2 1015.7,1070.0 1022.5,920.5 1028.3,887.9 1034.5,927.0 1041.0,796.7 1047.1,861.4 1053.9,881.9 1060.4,889.1 1066.4,890.3 1072.4,920.5 1078.5,885.0 1085.7,955.5 1091.0,995.0 1103.0,940.4 1109.5,760.3 1115.8,805.9 1122.1,819.0 1128.3,810.4 1134.6,704.4 1147.2,878.0 1153.7,865.0 1159.7,910.5 1165.7,774.6 1172.2,774.6 1184.7,620.5 1191.0,724.5 1197.3,643.5 1209.8,789.6 1216.1,810.9 1222.6,902.7 1227.8,905.3 1240.9,736.5 1247.4,725.7 1253.7,720.2 1266.2,534.7 1272.5,646.8 1278.5,614.9 1285.0,701.9 1291.3,723.2 1297.5,805.9 1303.5,661.8 1310.1,640.5 1316.3,725.0 1325.6,840.0 1334.4,900.1 1340.9,931.3 1347.6,465.1 1353.7,583.0 1365.6,845.5 1372.1,872.8 1378.7,783.4 1385.2,836.0 1397.8,584.1 1403.8,723.2 1420.0,850.0 1434.3,958.6 1441.3,634.2 1447.6,768.3 1453.8,804.7 1460.1,745.8 1466.4,773.3 1472.6,812.2 1478.9,778.3 1491.4,580.9 1497.7,701.9 1504.0,655.0 1516.5,579.1 1522.8,484.6 1529.0,504.7 1535.3,690.0 1541.0,755.0 1547.8,740.5 1557.8,888.0 L1557.8,1208.5 Z"/><path d="M1557.8,748.0 C1558.6,749.8 1561.1,754.5 1562.7,758.7 C1564.3,762.9 1566.0,768.5 1567.6,773.4 C1569.2,778.2 1570.9,783.0 1572.5,787.8 C1574.1,792.5 1575.7,797.2 1577.3,801.9 C1578.9,806.6 1580.6,811.2 1582.2,815.8 C1583.8,820.4 1585.5,824.8 1587.1,829.3 C1588.7,833.8 1590.4,838.1 1592.0,842.5 C1593.6,846.9 1595.3,851.1 1596.9,855.4 C1598.5,859.6 1600.2,863.9 1601.8,868.0 C1603.4,872.1 1605.1,876.2 1606.7,880.3 C1608.3,884.3 1610.0,888.3 1611.6,892.3 C1613.2,896.2 1614.8,900.1 1616.4,904.0 C1618.0,907.9 1619.7,911.6 1621.3,915.4 C1622.9,919.1 1624.6,922.9 1626.2,926.5 C1627.8,930.1 1629.5,933.7 1631.1,937.2 C1632.7,940.7 1634.4,944.3 1636.0,947.7 C1637.6,951.1 1639.3,954.5 1640.9,957.8 C1642.5,961.1 1644.2,964.4 1645.8,967.6 C1647.4,970.8 1649.1,974.0 1650.7,977.1 C1652.3,980.2 1653.9,983.3 1655.5,986.3 C1657.1,989.3 1658.8,992.3 1660.4,995.2 C1662.0,998.1 1663.7,1000.9 1665.3,1003.7 C1666.9,1006.5 1668.6,1009.2 1670.2,1011.9 C1671.8,1014.6 1673.5,1017.2 1675.1,1019.8 C1676.7,1022.4 1678.4,1024.8 1680.0,1027.3 C1681.6,1029.8 1683.3,1032.2 1684.9,1034.6 C1686.5,1037.0 1688.2,1039.3 1689.8,1041.5 C1691.4,1043.7 1693.0,1045.9 1694.6,1048.0 C1696.2,1050.1 1697.9,1052.3 1699.5,1054.3 C1701.1,1056.3 1702.8,1058.3 1704.4,1060.2 C1706.0,1062.1 1707.7,1063.9 1709.3,1065.7 C1710.9,1067.5 1712.6,1069.3 1714.2,1071.0 C1715.8,1072.7 1717.5,1074.2 1719.1,1075.8 C1720.7,1077.4 1722.4,1078.9 1724.0,1080.4 C1725.6,1081.9 1727.3,1083.2 1728.9,1084.6 C1730.5,1085.9 1732.1,1087.3 1733.7,1088.5 C1735.3,1089.7 1737.0,1090.9 1738.6,1092.0 C1740.2,1093.1 1741.9,1094.1 1743.5,1095.1 C1745.1,1096.1 1747.6,1097.4 1748.4,1097.9 L1748.4,1208.5 L1557.8,1208.5 Z"/><path d="M1557.8,888.0 C1558.3,892.5 1559.9,903.3 1561.0,915.0 C1562.1,926.7 1562.6,940.1 1564.5,958.0 C1566.4,975.9 1569.6,1002.2 1572.6,1022.6 C1575.6,1043.0 1578.5,1062.9 1582.3,1080.6 C1586.1,1098.3 1590.9,1115.5 1595.2,1129.0 C1599.5,1142.5 1603.2,1151.6 1608.0,1161.3 C1612.8,1171.0 1617.7,1180.3 1624.2,1187.0 C1630.7,1193.7 1637.7,1198.1 1646.8,1201.6 C1655.9,1205.1 1662.1,1206.8 1679.0,1208.0 C1695.9,1209.2 1736.8,1208.8 1748.4,1209.0 L1748.4,1208.5 L1557.8,1208.5 Z"/></clipPath></defs><g clip-path="url(#areaclip)" stroke="#000" stroke-opacity="0.07" stroke-width="2"><line x1="433" x2="1749" y1="1208.5" y2="1208.5"/><line x1="433" x2="1749" y1="1047.5" y2="1047.5"/><line x1="433" x2="1749" y1="886.5" y2="886.5"/><line x1="433" x2="1749" y1="725.5" y2="725.5"/><line x1="433" x2="1749" y1="564.5" y2="564.5"/><line x1="433" x2="1749" y1="403.5" y2="403.5"/><line x1="562.5" x2="562.5" y1="403" y2="1209"/><line x1="755.6" x2="755.6" y1="403" y2="1209"/><line x1="931.7" x2="931.7" y1="403" y2="1209"/><line x1="1125.1" x2="1125.1" y1="403" y2="1209"/><line x1="1313.0" x2="1313.0" y1="403" y2="1209"/><line x1="1507.2" x2="1507.2" y1="403" y2="1209"/><line x1="1695.2" x2="1695.2" y1="403" y2="1209"/></g>
<polyline points="433.0,802.4 440.2,802.4 446.6,828.9 452.4,823.1 465.2,823.1 471.5,812.9 483.3,812.9 490.7,803.3 496.5,803.3 508.8,783.3 515.2,779.0 521.6,779.0 528.0,773.0 534.4,772.0 540.8,772.0 546.7,773.0 552.5,769.2 558.9,759.6 564.2,764.1 571.7,764.1 577.6,758.8 583.4,761.3 589.8,760.3 596.6,764.1 608.5,748.5 615.3,720.8 621.3,710.2 628.1,710.2 634.1,684.6 639.8,677.2 647.3,675.0 659.0,676.7 665.4,672.5 671.8,671.8 678.2,668.7 684.2,668.7 690.3,683.6 696.7,687.4 702.7,684.0 715.5,684.0 721.9,680.4 728.3,678.9 734.6,673.3 741.0,673.3 747.4,675.0 760.0,675.2 771.9,681.2 779.0,679.5 785.0,679.0 791.0,676.7 808.8,676.7 815.2,674.0 823.8,679.5 833.8,683.8 841.0,683.8 846.9,682.4 854.0,687.1 864.8,687.6 871.9,688.3 878.6,671.2 883.8,671.2 891.0,674.8 908.8,674.8 916.0,676.0 922.4,669.8 928.6,669.8 934.5,683.6 941.0,683.6 948.1,686.0 953.3,686.0 960.0,678.8 972.4,678.8 979.0,673.3 991.0,673.3 1002.9,678.1 1009.5,662.1 1015.2,665.7 1021.9,665.7 1028.6,654.3 1035.0,656.7 1041.7,649.0 1047.4,628.8 1053.3,628.8 1059.5,632.9 1066.7,619.3 1090.0,618.4 1096.3,618.4 1103.0,621.0 1109.5,612.9 1115.1,612.9 1122.1,601.7 1135.1,596.6 1147.6,590.4 1165.2,588.4 1177.7,582.4 1190.3,581.1 1196.5,583.4 1204.0,579.1 1215.3,584.9 1227.8,584.9 1234.9,591.6 1247.4,591.6 1260.4,596.6 1270.5,595.4 1280.5,596.6 1290.5,595.4 1296.8,597.9 1304.3,597.9 1313.1,600.4 1328.1,601.7 1340.6,607.9 1348.1,611.2 1354.4,611.7 1360.7,616.2 1372.7,616.2 1379.5,626.7 1392.0,633.5 1403.3,633.0 1410.8,635.5 1420.0,638.0 1428.8,639.2 1441.3,645.0 1460.1,644.3 1466.4,678.1 1472.6,681.9 1478.9,690.1 1485.2,686.1 1492.7,692.6 1497.7,692.6 1504.0,696.1 1510.2,694.4 1516.5,694.4 1522.8,689.4 1529.0,693.1 1535.3,701.2 1541.6,702.7 1547.8,701.9 1557.8,701.9" fill="none" stroke="#000" stroke-opacity="0.08" stroke-width="5.6" transform="translate(1,2)" stroke-linejoin="round"/><polyline points="433.0,802.4 440.2,802.4 446.6,828.9 452.4,823.1 465.2,823.1 471.5,812.9 483.3,812.9 490.7,803.3 496.5,803.3 508.8,783.3 515.2,779.0 521.6,779.0 528.0,773.0 534.4,772.0 540.8,772.0 546.7,773.0 552.5,769.2 558.9,759.6 564.2,764.1 571.7,764.1 577.6,758.8 583.4,761.3 589.8,760.3 596.6,764.1 608.5,748.5 615.3,720.8 621.3,710.2 628.1,710.2 634.1,684.6 639.8,677.2 647.3,675.0 659.0,676.7 665.4,672.5 671.8,671.8 678.2,668.7 684.2,668.7 690.3,683.6 696.7,687.4 702.7,684.0 715.5,684.0 721.9,680.4 728.3,678.9 734.6,673.3 741.0,673.3 747.4,675.0 760.0,675.2 771.9,681.2 779.0,679.5 785.0,679.0 791.0,676.7 808.8,676.7 815.2,674.0 823.8,679.5 833.8,683.8 841.0,683.8 846.9,682.4 854.0,687.1 864.8,687.6 871.9,688.3 878.6,671.2 883.8,671.2 891.0,674.8 908.8,674.8 916.0,676.0 922.4,669.8 928.6,669.8 934.5,683.6 941.0,683.6 948.1,686.0 953.3,686.0 960.0,678.8 972.4,678.8 979.0,673.3 991.0,673.3 1002.9,678.1 1009.5,662.1 1015.2,665.7 1021.9,665.7 1028.6,654.3 1035.0,656.7 1041.7,649.0 1047.4,628.8 1053.3,628.8 1059.5,632.9 1066.7,619.3 1090.0,618.4 1096.3,618.4 1103.0,621.0 1109.5,612.9 1115.1,612.9 1122.1,601.7 1135.1,596.6 1147.6,590.4 1165.2,588.4 1177.7,582.4 1190.3,581.1 1196.5,583.4 1204.0,579.1 1215.3,584.9 1227.8,584.9 1234.9,591.6 1247.4,591.6 1260.4,596.6 1270.5,595.4 1280.5,596.6 1290.5,595.4 1296.8,597.9 1304.3,597.9 1313.1,600.4 1328.1,601.7 1340.6,607.9 1348.1,611.2 1354.4,611.7 1360.7,616.2 1372.7,616.2 1379.5,626.7 1392.0,633.5 1403.3,633.0 1410.8,635.5 1420.0,638.0 1428.8,639.2 1441.3,645.0 1460.1,644.3 1466.4,678.1 1472.6,681.9 1478.9,690.1 1485.2,686.1 1492.7,692.6 1497.7,692.6 1504.0,696.1 1510.2,694.4 1516.5,694.4 1522.8,689.4 1529.0,693.1 1535.3,701.2 1541.6,702.7 1547.8,701.9 1557.8,701.9" fill="none" stroke="#000000" stroke-opacity="1.00" stroke-width="2.6" stroke-linejoin="round"/>
<polyline points="1557.8,701.9 1577.9,701.2 1590.4,701.2 1604.2,702.7 1610.5,706.2 1616.7,706.2 1623.0,709.4 1629.3,719.4 1648.1,719.4 1654.3,679.3 1660.6,671.1 1666.9,655.5 1673.1,662.6 1691.9,662.6 1698.2,668.6 1704.5,668.6 1710.7,706.9 1723.3,706.9 1729.5,682.6" fill="none" stroke="#000" stroke-opacity="0.08" stroke-width="4.8" transform="translate(1,2)" stroke-linejoin="round"/><polyline points="1557.8,701.9 1577.9,701.2 1590.4,701.2 1604.2,702.7 1610.5,706.2 1616.7,706.2 1623.0,709.4 1629.3,719.4 1648.1,719.4 1654.3,679.3 1660.6,671.1 1666.9,655.5 1673.1,662.6 1691.9,662.6 1698.2,668.6 1704.5,668.6 1710.7,706.9 1723.3,706.9 1729.5,682.6" fill="none" stroke="#222222" stroke-opacity="0.90" stroke-width="1.8" stroke-linejoin="round"/>
<g fill="#2c5566"><rect x="432.8" y="1194.7" width="4.2" height="14.3"/><rect x="437.9" y="1167.0" width="4.2" height="42.0"/><rect x="444.1" y="1106.9" width="4.2" height="102.1"/><rect x="450.4" y="1149.6" width="4.2" height="59.4"/><rect x="456.6" y="1172.5" width="4.2" height="36.5"/><rect x="462.8" y="1154.0" width="4.2" height="55.0"/><rect x="469.0" y="1160.7" width="4.2" height="48.3"/><rect x="475.3" y="1197.0" width="4.2" height="12.0"/><rect x="481.7" y="1160.7" width="4.2" height="48.3"/><rect x="487.9" y="1147.0" width="4.2" height="62.0"/><rect x="494.2" y="1145.8" width="4.2" height="63.2"/><rect x="500.4" y="1141.4" width="4.2" height="67.6"/><rect x="506.6" y="1119.1" width="4.2" height="89.9"/><rect x="512.9" y="1167.0" width="4.2" height="42.0"/><rect x="519.1" y="1087.3" width="4.2" height="121.7"/><rect x="525.3" y="1137.0" width="4.2" height="72.0"/><rect x="531.5" y="1128.0" width="4.2" height="81.0"/><rect x="537.8" y="1174.0" width="4.2" height="35.0"/><rect x="544.0" y="1079.0" width="4.2" height="130.0"/><rect x="550.5" y="1187.6" width="4.2" height="21.4"/><rect x="556.7" y="1136.2" width="4.2" height="72.8"/><rect x="562.9" y="1205.2" width="4.2" height="3.8"/><rect x="569.1" y="1185.2" width="4.2" height="23.8"/><rect x="575.4" y="1163.6" width="4.2" height="45.4"/><rect x="581.6" y="1164.7" width="4.2" height="44.3"/><rect x="587.8" y="1165.2" width="4.2" height="43.8"/><rect x="594.0" y="1154.0" width="4.2" height="55.0"/><rect x="600.5" y="1099.1" width="4.2" height="109.9"/><rect x="606.7" y="1113.1" width="4.2" height="95.9"/><rect x="612.9" y="1173.0" width="4.2" height="36.0"/><rect x="619.2" y="1155.8" width="4.2" height="53.2"/><rect x="625.4" y="1168.0" width="4.2" height="41.0"/><rect x="631.6" y="1181.4" width="4.2" height="27.6"/><rect x="637.9" y="1119.8" width="4.2" height="89.2"/><rect x="644.1" y="1110.9" width="4.2" height="98.1"/><rect x="650.3" y="1108.0" width="4.2" height="101.0"/><rect x="656.5" y="1179.2" width="4.2" height="29.8"/><rect x="662.8" y="1173.0" width="4.2" height="36.0"/><rect x="669.0" y="1167.0" width="4.2" height="42.0"/><rect x="675.2" y="1160.7" width="4.2" height="48.3"/><rect x="681.9" y="1151.0" width="4.2" height="58.0"/><rect x="688.1" y="1085.1" width="4.2" height="123.9"/><rect x="694.4" y="1179.2" width="4.2" height="29.8"/><rect x="700.6" y="1155.8" width="4.2" height="53.2"/><rect x="706.8" y="1128.0" width="4.2" height="81.0"/><rect x="713.0" y="1174.0" width="4.2" height="35.0"/><rect x="719.3" y="1172.5" width="4.2" height="36.5"/><rect x="725.5" y="1137.0" width="4.2" height="72.0"/><rect x="731.7" y="1087.3" width="4.2" height="121.7"/><rect x="737.9" y="1180.3" width="4.2" height="28.7"/><rect x="744.2" y="1134.0" width="4.2" height="75.0"/><rect x="750.4" y="1183.6" width="4.2" height="25.4"/><rect x="756.6" y="1183.6" width="4.2" height="25.4"/><rect x="769.5" y="1096.6" width="4.2" height="112.4"/><rect x="776.0" y="1186.6" width="4.2" height="22.4"/><rect x="782.0" y="1164.9" width="4.2" height="44.1"/><rect x="788.5" y="1183.4" width="4.2" height="25.6"/><rect x="800.9" y="1090.0" width="4.2" height="119.0"/><rect x="807.4" y="1155.2" width="4.2" height="53.8"/><rect x="813.4" y="1132.8" width="4.2" height="76.2"/><rect x="819.7" y="1146.5" width="4.2" height="62.5"/><rect x="825.9" y="1107.0" width="4.2" height="102.0"/><rect x="832.2" y="1181.0" width="4.2" height="28.0"/><rect x="838.7" y="1193.8" width="4.2" height="15.2"/><rect x="844.8" y="1117.8" width="4.2" height="91.2"/><rect x="851.0" y="1177.0" width="4.2" height="32.0"/><rect x="857.3" y="1124.8" width="4.2" height="84.2"/><rect x="863.6" y="1174.5" width="4.2" height="34.5"/><rect x="869.6" y="1021.8" width="4.2" height="187.2"/><rect x="876.1" y="1175.5" width="4.2" height="33.5"/><rect x="882.4" y="1187.0" width="4.2" height="22.0"/><rect x="888.9" y="1157.6" width="4.2" height="51.4"/><rect x="901.2" y="1137.6" width="4.2" height="71.4"/><rect x="907.5" y="1194.8" width="4.2" height="14.2"/><rect x="913.7" y="1064.7" width="4.2" height="144.3"/><rect x="920.0" y="1186.6" width="4.2" height="22.4"/><rect x="926.3" y="1179.8" width="4.2" height="29.2"/><rect x="932.3" y="1138.8" width="4.2" height="70.2"/><rect x="938.6" y="1187.0" width="4.2" height="22.0"/><rect x="944.9" y="1146.0" width="4.2" height="63.0"/><rect x="951.1" y="1177.4" width="4.2" height="31.6"/><rect x="957.4" y="1193.1" width="4.2" height="15.9"/><rect x="963.7" y="1156.9" width="4.2" height="52.1"/><rect x="969.9" y="1205.9" width="4.2" height="3.1"/><rect x="976.2" y="1189.0" width="4.2" height="20.0"/><rect x="982.5" y="1188.3" width="4.2" height="20.7"/><rect x="988.8" y="1166.5" width="4.2" height="42.5"/><rect x="1001.1" y="1187.0" width="4.2" height="22.0"/><rect x="1007.6" y="1191.9" width="4.2" height="17.1"/><rect x="1013.6" y="1169.0" width="4.2" height="40.0"/><rect x="1019.9" y="1070.8" width="4.2" height="138.2"/><rect x="1026.2" y="1129.2" width="4.2" height="79.8"/><rect x="1032.4" y="1178.6" width="4.2" height="30.4"/><rect x="1038.7" y="1058.0" width="4.2" height="151.0"/><rect x="1045.0" y="1181.0" width="4.2" height="28.0"/><rect x="1051.3" y="1158.6" width="4.2" height="50.4"/><rect x="1057.5" y="1152.0" width="4.2" height="57.0"/><rect x="1063.8" y="1149.7" width="4.2" height="59.3"/><rect x="1070.3" y="1172.1" width="4.2" height="36.9"/><rect x="1076.4" y="1128.0" width="4.2" height="81.0"/><rect x="1089.2" y="1183.5" width="4.2" height="25.5"/><rect x="1095.2" y="1144.5" width="4.2" height="64.5"/><rect x="1100.9" y="1144.5" width="4.2" height="64.5"/><rect x="1107.4" y="1023.6" width="4.2" height="185.4"/><rect x="1113.9" y="1158.3" width="4.2" height="50.7"/><rect x="1120.1" y="1142.7" width="4.2" height="66.3"/><rect x="1126.4" y="1129.7" width="4.2" height="79.3"/><rect x="1132.6" y="1053.5" width="4.2" height="155.5"/><rect x="1138.9" y="1198.3" width="4.2" height="10.7"/><rect x="1145.1" y="1181.7" width="4.2" height="27.3"/><rect x="1151.3" y="1136.7" width="4.2" height="72.3"/><rect x="1157.6" y="1178.3" width="4.2" height="30.7"/><rect x="1163.8" y="1050.4" width="4.2" height="158.6"/><rect x="1170.1" y="1127.6" width="4.2" height="81.4"/><rect x="1176.3" y="1087.3" width="4.2" height="121.7"/><rect x="1182.5" y="1040.5" width="4.2" height="168.5"/><rect x="1188.8" y="1175.2" width="4.2" height="33.8"/><rect x="1195.0" y="1056.6" width="4.2" height="152.4"/><rect x="1201.3" y="1160.1" width="4.2" height="48.9"/><rect x="1207.5" y="1167.1" width="4.2" height="41.9"/><rect x="1213.7" y="1146.6" width="4.2" height="62.4"/><rect x="1220.0" y="1203.0" width="4.2" height="6.0"/><rect x="1226.2" y="1152.8" width="4.2" height="56.2"/><rect x="1232.5" y="1097.2" width="4.2" height="111.8"/><rect x="1238.7" y="1064.4" width="4.2" height="144.6"/><rect x="1244.9" y="1111.5" width="4.2" height="97.5"/><rect x="1251.2" y="1113.3" width="4.2" height="95.7"/><rect x="1257.4" y="1039.2" width="4.2" height="169.8"/><rect x="1263.7" y="1035.3" width="4.2" height="173.7"/><rect x="1269.9" y="1166.6" width="4.2" height="42.4"/><rect x="1276.1" y="1078.7" width="4.2" height="130.3"/><rect x="1282.4" y="1161.4" width="4.2" height="47.6"/><rect x="1288.6" y="1129.7" width="4.2" height="79.3"/><rect x="1295.1" y="1179.6" width="4.2" height="29.4"/><rect x="1301.4" y="1024.9" width="4.2" height="184.1"/><rect x="1307.6" y="1089.1" width="4.2" height="119.9"/><rect x="1313.9" y="1173.1" width="4.2" height="35.9"/><rect x="1320.1" y="1166.1" width="4.2" height="42.9"/><rect x="1326.3" y="1172.6" width="4.2" height="36.4"/><rect x="1332.6" y="1178.3" width="4.2" height="30.7"/><rect x="1338.8" y="1173.9" width="4.2" height="35.1"/><rect x="1345.3" y="805.2" width="4.2" height="403.8"/><rect x="1357.8" y="1186.1" width="4.2" height="22.9"/><rect x="1364.0" y="1187.4" width="4.2" height="21.6"/><rect x="1370.3" y="1161.4" width="4.2" height="47.6"/><rect x="1376.5" y="1078.7" width="4.2" height="130.3"/><rect x="1382.7" y="1166.1" width="4.2" height="42.9"/><rect x="1389.0" y="997.6" width="4.2" height="211.4"/><rect x="1395.2" y="1056.1" width="4.2" height="152.9"/><rect x="1401.5" y="1194.7" width="4.2" height="14.3"/><rect x="1407.7" y="1151.0" width="4.2" height="58.0"/><rect x="1413.9" y="1169.2" width="4.2" height="39.8"/><rect x="1420.5" y="1177.0" width="4.2" height="32.0"/><rect x="1427.0" y="1186.1" width="4.2" height="22.9"/><rect x="1433.0" y="1177.0" width="4.2" height="32.0"/><rect x="1439.2" y="919.6" width="4.2" height="289.4"/><rect x="1451.7" y="1147.9" width="4.2" height="61.1"/><rect x="1457.9" y="1088.1" width="4.2" height="120.9"/><rect x="1464.2" y="1145.3" width="4.2" height="63.7"/><rect x="1470.4" y="1154.9" width="4.2" height="54.1"/><rect x="1476.7" y="1108.1" width="4.2" height="100.9"/><rect x="1482.9" y="1018.9" width="4.2" height="190.1"/><rect x="1489.1" y="1062.1" width="4.2" height="146.9"/><rect x="1495.4" y="1181.7" width="4.2" height="27.3"/><rect x="1501.6" y="1078.7" width="4.2" height="130.3"/><rect x="1507.9" y="1100.8" width="4.2" height="108.2"/><rect x="1514.1" y="1054.8" width="4.2" height="154.2"/><rect x="1520.3" y="1015.8" width="4.2" height="193.2"/><rect x="1526.6" y="1088.1" width="4.2" height="120.9"/><rect x="1539.1" y="1166.1" width="4.2" height="42.9"/><rect x="1545.3" y="1112.5" width="4.2" height="96.5"/><rect x="1551.5" y="1165.3" width="4.2" height="43.7"/></g>
<g fill="#000" fill-opacity="0.1" transform="translate(1,2)"><circle cx="454.9" cy="728.3" r="4.8"/><circle cx="470.7" cy="649.0" r="4.8"/><circle cx="488.8" cy="713.8" r="4.8"/><circle cx="504.4" cy="646.3" r="4.8"/><circle cx="511.0" cy="628.8" r="4.8"/><circle cx="514.8" cy="701.0" r="4.8"/><circle cx="527.4" cy="677.0" r="4.8"/><circle cx="532.5" cy="749.6" r="4.8"/><circle cx="547.4" cy="802.9" r="4.8"/><circle cx="558.0" cy="589.8" r="4.8"/><circle cx="559.1" cy="600.0" r="4.8"/><circle cx="577.0" cy="592.6" r="4.8"/><circle cx="591.7" cy="714.9" r="4.8"/><circle cx="602.3" cy="698.3" r="4.8"/><circle cx="620.2" cy="665.2" r="4.8"/><circle cx="642.4" cy="608.0" r="4.8"/><circle cx="646.2" cy="658.8" r="4.8"/><circle cx="664.1" cy="601.5" r="4.8"/><circle cx="676.7" cy="656.0" r="4.8"/><circle cx="689.7" cy="791.6" r="4.8"/><circle cx="704.8" cy="618.6" r="4.8"/><circle cx="708.0" cy="676.1" r="4.8"/><circle cx="730.0" cy="653.1" r="4.8"/><circle cx="733.8" cy="706.0" r="4.8"/><circle cx="745.5" cy="624.3" r="4.8"/><circle cx="770.7" cy="646.7" r="4.8"/><circle cx="773.1" cy="763.8" r="4.8"/><circle cx="804.8" cy="683.6" r="4.8"/><circle cx="808.1" cy="659.0" r="4.8"/><circle cx="817.6" cy="597.1" r="4.8"/><circle cx="821.4" cy="724.5" r="4.8"/><circle cx="848.6" cy="641.4" r="4.8"/><circle cx="861.7" cy="684.0" r="4.8"/><circle cx="936.2" cy="701.9" r="4.8"/><circle cx="949.3" cy="719.8" r="4.8"/><circle cx="978.6" cy="611.0" r="4.8"/><circle cx="992.6" cy="688.3" r="4.8"/><circle cx="1002.9" cy="606.9" r="4.8"/><circle cx="1014.3" cy="694.8" r="4.8"/><circle cx="1026.7" cy="586.0" r="4.8"/><circle cx="1039.8" cy="591.9" r="4.8"/><circle cx="1045.7" cy="499.0" r="4.8"/><circle cx="1058.1" cy="662.9" r="4.8"/><circle cx="1067.6" cy="536.2" r="4.8"/><circle cx="1080.2" cy="613.8" r="4.8"/><circle cx="1101.8" cy="656.8" r="4.8"/><circle cx="1108.8" cy="517.7" r="4.8"/><circle cx="1120.6" cy="544.8" r="4.8"/><circle cx="1127.6" cy="602.9" r="4.8"/><circle cx="1146.6" cy="508.2" r="4.8"/><circle cx="1152.7" cy="573.3" r="4.8"/><circle cx="1172.7" cy="562.8" r="4.8"/><circle cx="1198.5" cy="601.2" r="4.8"/><circle cx="1207.8" cy="618.0" r="4.8"/><circle cx="1214.8" cy="662.6" r="4.8"/><circle cx="1232.9" cy="618.7" r="4.8"/><circle cx="1245.4" cy="591.6" r="4.8"/><circle cx="1255.4" cy="606.7" r="4.8"/><circle cx="1258.7" cy="674.3" r="4.8"/><circle cx="1279.7" cy="609.2" r="4.8"/><circle cx="1289.5" cy="612.4" r="4.8"/><circle cx="1304.8" cy="582.4" r="4.8"/><circle cx="1316.3" cy="621.0" r="4.8"/><circle cx="1324.3" cy="618.0" r="4.8"/><circle cx="1339.4" cy="528.5" r="4.8"/><circle cx="1347.6" cy="596.1" r="4.8"/><circle cx="1346.9" cy="620.5" r="4.8"/><circle cx="1348.1" cy="643.8" r="4.8"/><circle cx="1346.9" cy="653.5" r="4.8"/><circle cx="1380.2" cy="702.7" r="4.8"/><circle cx="1392.0" cy="710.2" r="4.8"/><circle cx="1408.3" cy="687.4" r="4.8"/><circle cx="1424.3" cy="655.0" r="4.8"/><circle cx="1434.3" cy="616.7" r="4.8"/><circle cx="1441.3" cy="653.8" r="4.8"/><circle cx="1466.0" cy="928.7" r="4.8"/><circle cx="1473.4" cy="738.7" r="4.8"/><circle cx="1480.2" cy="763.3" r="4.8"/><circle cx="1485.7" cy="620.5" r="4.8"/><circle cx="1510.2" cy="653.5" r="4.8"/><circle cx="1523.5" cy="609.7" r="4.8"/><circle cx="1543.3" cy="731.2" r="4.8"/><circle cx="1546.1" cy="681.9" r="4.8"/><circle cx="444.7" cy="1097.0" r="4.8"/></g>
<g fill="#434343"><circle cx="454.9" cy="728.3" r="4.8"/><circle cx="470.7" cy="649.0" r="4.8"/><circle cx="488.8" cy="713.8" r="4.8"/><circle cx="504.4" cy="646.3" r="4.8"/><circle cx="511.0" cy="628.8" r="4.8"/><circle cx="514.8" cy="701.0" r="4.8"/><circle cx="527.4" cy="677.0" r="4.8"/><circle cx="532.5" cy="749.6" r="4.8"/><circle cx="547.4" cy="802.9" r="4.8"/><circle cx="558.0" cy="589.8" r="4.8"/><circle cx="559.1" cy="600.0" r="4.8"/><circle cx="577.0" cy="592.6" r="4.8"/><circle cx="591.7" cy="714.9" r="4.8"/><circle cx="602.3" cy="698.3" r="4.8"/><circle cx="620.2" cy="665.2" r="4.8"/><circle cx="642.4" cy="608.0" r="4.8"/><circle cx="646.2" cy="658.8" r="4.8"/><circle cx="664.1" cy="601.5" r="4.8"/><circle cx="676.7" cy="656.0" r="4.8"/><circle cx="689.7" cy="791.6" r="4.8"/><circle cx="704.8" cy="618.6" r="4.8"/><circle cx="708.0" cy="676.1" r="4.8"/><circle cx="730.0" cy="653.1" r="4.8"/><circle cx="733.8" cy="706.0" r="4.8"/><circle cx="745.5" cy="624.3" r="4.8"/><circle cx="770.7" cy="646.7" r="4.8"/><circle cx="773.1" cy="763.8" r="4.8"/><circle cx="804.8" cy="683.6" r="4.8"/><circle cx="808.1" cy="659.0" r="4.8"/><circle cx="817.6" cy="597.1" r="4.8"/><circle cx="821.4" cy="724.5" r="4.8"/><circle cx="848.6" cy="641.4" r="4.8"/><circle cx="861.7" cy="684.0" r="4.8"/><circle cx="936.2" cy="701.9" r="4.8"/><circle cx="949.3" cy="719.8" r="4.8"/><circle cx="978.6" cy="611.0" r="4.8"/><circle cx="992.6" cy="688.3" r="4.8"/><circle cx="1002.9" cy="606.9" r="4.8"/><circle cx="1014.3" cy="694.8" r="4.8"/><circle cx="1026.7" cy="586.0" r="4.8"/><circle cx="1039.8" cy="591.9" r="4.8"/><circle cx="1045.7" cy="499.0" r="4.8"/><circle cx="1058.1" cy="662.9" r="4.8"/><circle cx="1067.6" cy="536.2" r="4.8"/><circle cx="1080.2" cy="613.8" r="4.8"/><circle cx="1101.8" cy="656.8" r="4.8"/><circle cx="1108.8" cy="517.7" r="4.8"/><circle cx="1120.6" cy="544.8" r="4.8"/><circle cx="1127.6" cy="602.9" r="4.8"/><circle cx="1146.6" cy="508.2" r="4.8"/><circle cx="1152.7" cy="573.3" r="4.8"/><circle cx="1172.7" cy="562.8" r="4.8"/><circle cx="1198.5" cy="601.2" r="4.8"/><circle cx="1207.8" cy="618.0" r="4.8"/><circle cx="1214.8" cy="662.6" r="4.8"/><circle cx="1232.9" cy="618.7" r="4.8"/><circle cx="1245.4" cy="591.6" r="4.8"/><circle cx="1255.4" cy="606.7" r="4.8"/><circle cx="1258.7" cy="674.3" r="4.8"/><circle cx="1279.7" cy="609.2" r="4.8"/><circle cx="1289.5" cy="612.4" r="4.8"/><circle cx="1304.8" cy="582.4" r="4.8"/><circle cx="1316.3" cy="621.0" r="4.8"/><circle cx="1324.3" cy="618.0" r="4.8"/><circle cx="1339.4" cy="528.5" r="4.8"/><circle cx="1347.6" cy="596.1" r="4.8"/><circle cx="1346.9" cy="620.5" r="4.8"/><circle cx="1348.1" cy="643.8" r="4.8"/><circle cx="1346.9" cy="653.5" r="4.8"/><circle cx="1380.2" cy="702.7" r="4.8"/><circle cx="1392.0" cy="710.2" r="4.8"/><circle cx="1408.3" cy="687.4" r="4.8"/><circle cx="1424.3" cy="655.0" r="4.8"/><circle cx="1434.3" cy="616.7" r="4.8"/><circle cx="1441.3" cy="653.8" r="4.8"/><circle cx="1466.0" cy="928.7" r="4.8"/><circle cx="1473.4" cy="738.7" r="4.8"/><circle cx="1480.2" cy="763.3" r="4.8"/><circle cx="1485.7" cy="620.5" r="4.8"/><circle cx="1510.2" cy="653.5" r="4.8"/><circle cx="1523.5" cy="609.7" r="4.8"/><circle cx="1543.3" cy="731.2" r="4.8"/><circle cx="1546.1" cy="681.9" r="4.8"/><circle cx="444.7" cy="1097.0" r="4.8"/></g>
<polyline points="433.0,987.2 443.3,986.3 452.2,985.2 464.5,985.7 471.1,989.4 483.4,990.1 491.2,994.6 497.8,995.7 510.1,999.7 517.9,1001.2 527.4,999.0 535.7,1004.1 545.7,1000.1 554.6,1003.5 572.4,1003.5 581.2,1004.6 590.1,1002.4 596.8,1000.6 603.0,985.0 611.3,990.1 621.3,997.5 628.0,997.9 639.1,1002.8 646.9,984.6 652.4,987.2 658.0,987.4 665.8,993.0 671.3,993.0 683.6,995.2 690.2,973.4 701.3,973.0 709.1,976.8 714.7,977.4 722.5,982.3 728.0,981.2 734.7,966.8 740.3,967.2 747.0,962.8 760.0,972.8 769.7,972.8 784.1,974.8 793.8,977.2 803.4,982.0 810.7,980.8 820.3,981.5 832.4,981.5 840.8,983.2 849.3,983.2 855.3,984.4 863.7,984.4 872.2,996.5 880.6,1001.3 895.1,1002.5 909.6,1008.5 919.2,1009.7 928.9,1014.6 933.7,1012.9 940.9,1015.8 947.0,1015.3 955.4,1019.4 969.9,1024.9 986.8,1026.6 997.6,1031.4 1003.7,1032.2 1009.7,1036.3 1018.1,1035.6 1037.4,1037.5 1053.1,1039.9 1060.4,1037.5 1072.4,1038.0 1079.7,1035.1 1090.0,1036.5 1100.4,1035.3 1122.5,1034.0 1129.0,1027.5 1145.9,1029.3 1153.7,1022.3 1165.4,1024.9 1173.2,1021.0 1190.1,1024.1 1197.1,1011.1 1216.1,1007.5 1227.8,1009.3 1234.3,984.1 1259.0,980.2 1266.8,984.6 1272.0,984.6 1278.5,953.4 1290.2,957.3 1303.2,961.2 1316.2,961.7 1340.9,962.5 1347.4,949.5 1372.1,952.9 1378.6,920.9 1385.1,922.7 1391.6,921.4 1404.6,926.1 1420.0,926.1 1434.3,930.5 1442.1,918.3 1459.0,922.7 1466.8,916.5 1490.2,914.9 1498.0,919.6 1503.2,919.1 1510.5,911.8 1516.2,915.7 1534.4,918.3 1543.5,919.1 1557.8,925.3" fill="none" stroke="#000" stroke-opacity="0.08" stroke-width="5.4" transform="translate(1,2)" stroke-linejoin="round"/><polyline points="433.0,987.2 443.3,986.3 452.2,985.2 464.5,985.7 471.1,989.4 483.4,990.1 491.2,994.6 497.8,995.7 510.1,999.7 517.9,1001.2 527.4,999.0 535.7,1004.1 545.7,1000.1 554.6,1003.5 572.4,1003.5 581.2,1004.6 590.1,1002.4 596.8,1000.6 603.0,985.0 611.3,990.1 621.3,997.5 628.0,997.9 639.1,1002.8 646.9,984.6 652.4,987.2 658.0,987.4 665.8,993.0 671.3,993.0 683.6,995.2 690.2,973.4 701.3,973.0 709.1,976.8 714.7,977.4 722.5,982.3 728.0,981.2 734.7,966.8 740.3,967.2 747.0,962.8 760.0,972.8 769.7,972.8 784.1,974.8 793.8,977.2 803.4,982.0 810.7,980.8 820.3,981.5 832.4,981.5 840.8,983.2 849.3,983.2 855.3,984.4 863.7,984.4 872.2,996.5 880.6,1001.3 895.1,1002.5 909.6,1008.5 919.2,1009.7 928.9,1014.6 933.7,1012.9 940.9,1015.8 947.0,1015.3 955.4,1019.4 969.9,1024.9 986.8,1026.6 997.6,1031.4 1003.7,1032.2 1009.7,1036.3 1018.1,1035.6 1037.4,1037.5 1053.1,1039.9 1060.4,1037.5 1072.4,1038.0 1079.7,1035.1 1090.0,1036.5 1100.4,1035.3 1122.5,1034.0 1129.0,1027.5 1145.9,1029.3 1153.7,1022.3 1165.4,1024.9 1173.2,1021.0 1190.1,1024.1 1197.1,1011.1 1216.1,1007.5 1227.8,1009.3 1234.3,984.1 1259.0,980.2 1266.8,984.6 1272.0,984.6 1278.5,953.4 1290.2,957.3 1303.2,961.2 1316.2,961.7 1340.9,962.5 1347.4,949.5 1372.1,952.9 1378.6,920.9 1385.1,922.7 1391.6,921.4 1404.6,926.1 1420.0,926.1 1434.3,930.5 1442.1,918.3 1459.0,922.7 1466.8,916.5 1490.2,914.9 1498.0,919.6 1503.2,919.1 1510.5,911.8 1516.2,915.7 1534.4,918.3 1543.5,919.1 1557.8,925.3" fill="none" stroke="#e0a66c" stroke-opacity="1.00" stroke-width="2.4" stroke-linejoin="round"/>
<polyline points="1557.8,925.3 1579.0,933.9 1595.2,942.0 1617.7,950.0 1637.1,956.5 1646.8,963.9 1654.8,974.2 1666.1,983.9 1679.0,987.1 1691.9,993.5 1703.2,998.4 1709.7,994.2 1717.7,998.4 1724.2,999.4 1729.0,1004.8" fill="none" stroke="#000" stroke-opacity="0.08" stroke-width="4.8" transform="translate(1,2)" stroke-linejoin="round"/><polyline points="1557.8,925.3 1579.0,933.9 1595.2,942.0 1617.7,950.0 1637.1,956.5 1646.8,963.9 1654.8,974.2 1666.1,983.9 1679.0,987.1 1691.9,993.5 1703.2,998.4 1709.7,994.2 1717.7,998.4 1724.2,999.4 1729.0,1004.8" fill="none" stroke="#e0a66c" stroke-opacity="0.85" stroke-width="1.8" stroke-linejoin="round"/>
<line x1="434" x2="434" y1="402" y2="1210" stroke="#9a9a9a" stroke-width="2"/>
<line x1="433" x2="1749" y1="1209.5" y2="1209.5" stroke="#9a9a9a" stroke-width="2.2"/>
<line x1="1749" x2="1749" y1="402" y2="1210" stroke="#8a8a8a" stroke-width="2"/>
<line x1="1819" x2="1819" y1="402" y2="1210" stroke="#d0d0d0" stroke-width="1.6"/>
<line x1="1893" x2="1893" y1="402" y2="1210" stroke="#d0d0d0" stroke-width="1.6"/>
<line x1="1749" x2="1759" y1="1208.5" y2="1208.5" stroke="#d0d0d0" stroke-width="1.6"/>
<line x1="1819" x2="1829" y1="1208.5" y2="1208.5" stroke="#d0d0d0" stroke-width="1.6"/>
<line x1="1893" x2="1903" y1="1208.5" y2="1208.5" stroke="#d0d0d0" stroke-width="1.6"/>
<line x1="1749" x2="1759" y1="1047.5" y2="1047.5" stroke="#d0d0d0" stroke-width="1.6"/>
<line x1="1819" x2="1829" y1="1047.5" y2="1047.5" stroke="#d0d0d0" stroke-width="1.6"/>
<line x1="1893" x2="1903" y1="1047.5" y2="1047.5" stroke="#d0d0d0" stroke-width="1.6"/>
<line x1="1749" x2="1759" y1="886.5" y2="886.5" stroke="#d0d0d0" stroke-width="1.6"/>
<line x1="1819" x2="1829" y1="886.5" y2="886.5" stroke="#d0d0d0" stroke-width="1.6"/>
<line x1="1893" x2="1903" y1="886.5" y2="886.5" stroke="#d0d0d0" stroke-width="1.6"/>
<line x1="1749" x2="1759" y1="725.5" y2="725.5" stroke="#d0d0d0" stroke-width="1.6"/>
<line x1="1819" x2="1829" y1="725.5" y2="725.5" stroke="#d0d0d0" stroke-width="1.6"/>
<line x1="1893" x2="1903" y1="725.5" y2="725.5" stroke="#d0d0d0" stroke-width="1.6"/>
<line x1="1749" x2="1759" y1="564.5" y2="564.5" stroke="#d0d0d0" stroke-width="1.6"/>
<line x1="1819" x2="1829" y1="564.5" y2="564.5" stroke="#d0d0d0" stroke-width="1.6"/>
<line x1="1893" x2="1903" y1="564.5" y2="564.5" stroke="#d0d0d0" stroke-width="1.6"/>
<line x1="1749" x2="1759" y1="403.5" y2="403.5" stroke="#d0d0d0" stroke-width="1.6"/>
<line x1="1819" x2="1829" y1="403.5" y2="403.5" stroke="#d0d0d0" stroke-width="1.6"/>
<line x1="1893" x2="1903" y1="403.5" y2="403.5" stroke="#d0d0d0" stroke-width="1.6"/>
<defs><clipPath id="ghc"><rect x="1749" y="331" width="253" height="920"/><rect x="363" y="331" width="1639" height="72"/></clipPath></defs><g clip-path="url(#ghc)" opacity="0.028"><text x="1694.0" y="350.5" font-size="22.53" fill="#000" font-weight="bold" textLength="163.0" lengthAdjust="spacingAndGlyphs">SPORTARTEN</text><text x="1166.6" y="351.5" font-size="23.26" fill="#000" textLength="175.0" lengthAdjust="spacingAndGlyphs">Synchronisation</text><text x="1395.0" y="351.5" font-size="23.26" fill="#000" textLength="244.0" lengthAdjust="spacingAndGlyphs">+  Training hinzufügen</text><text x="1695.0" y="600.5" font-size="22.53" fill="#000" font-weight="bold" textLength="202.0" lengthAdjust="spacingAndGlyphs">BERECHNUNGEN</text><text x="1735.0" y="662.0" font-size="23.26" fill="#000" font-weight="bold" textLength="229.0" lengthAdjust="spacingAndGlyphs">Effektiver VO2max</text><circle cx="1711" cy="654.0" r="8" fill="none" stroke="#000" stroke-width="2"/><text x="1735.0" y="705.0" font-size="23.26" fill="#000" font-weight="bold" textLength="174.0" lengthAdjust="spacingAndGlyphs">Marathonform</text><circle cx="1711" cy="697.0" r="8" fill="none" stroke="#000" stroke-width="2"/><text x="1735.0" y="748.5" font-size="23.26" fill="#000" font-weight="bold" textLength="176.0" lengthAdjust="spacingAndGlyphs">Müdigkeit (ATL)</text><circle cx="1711" cy="740.5" r="8" fill="none" stroke="#000" stroke-width="2"/><text x="1735.0" y="792.0" font-size="23.26" fill="#000" font-weight="bold" textLength="143.0" lengthAdjust="spacingAndGlyphs">Fitness (CTL)</text><circle cx="1711" cy="784.0" r="8" fill="none" stroke="#000" stroke-width="2"/><text x="1735.0" y="836.0" font-size="23.26" fill="#000" font-weight="bold" textLength="241.0" lengthAdjust="spacingAndGlyphs">Stress-Balance (TSB)</text><circle cx="1711" cy="828.0" r="8" fill="none" stroke="#000" stroke-width="2"/><text x="1735.0" y="880.0" font-size="23.26" fill="#000" font-weight="bold" textLength="245.0" lengthAdjust="spacingAndGlyphs">Workload Ratio (A:C)</text><circle cx="1711" cy="872.0" r="8" fill="none" stroke="#000" stroke-width="2"/><text x="1735.0" y="922.5" font-size="23.26" fill="#000" font-weight="bold" textLength="238.0" lengthAdjust="spacingAndGlyphs">Entspannter TRIMP</text><circle cx="1711" cy="914.5" r="8" fill="none" stroke="#000" stroke-width="2"/><text x="1735.0" y="965.0" font-size="23.26" fill="#000" font-weight="bold" textLength="128.0" lengthAdjust="spacingAndGlyphs">Monotonie</text><circle cx="1711" cy="957.0" r="8" fill="none" stroke="#000" stroke-width="2"/><text x="1735.0" y="1007.0" font-size="23.26" fill="#000" font-weight="bold" textLength="235.0" lengthAdjust="spacingAndGlyphs">Trainingsbelastung</text><circle cx="1711" cy="999.0" r="8" fill="none" stroke="#000" stroke-width="2"/><text x="1849.0" y="410.0" font-size="27.62" fill="#000" font-weight="bold" textLength="143.0" lengthAdjust="spacingAndGlyphs">574,92 km</text><text x="1882.0" y="439.5" font-size="20.35" fill="#000" textLength="110.0" lengthAdjust="spacingAndGlyphs">Radfahren</text><text x="1882.0" y="494.0" font-size="27.62" fill="#000" font-weight="bold" textLength="110.0" lengthAdjust="spacingAndGlyphs">9,00 km</text><text x="1860.0" y="522.0" font-size="20.35" fill="#000" textLength="132.0" lengthAdjust="spacingAndGlyphs">Schwimmen</text><text x="1694.0" y="1087.5" font-size="22.53" fill="#000" font-weight="bold" textLength="166.0" lengthAdjust="spacingAndGlyphs">PROGNOSE</text><text x="1705.0" y="1150.3" font-size="23.26" fill="#000" font-weight="bold" textLength="98.0" lengthAdjust="spacingAndGlyphs">1,00 km</text><text x="1705.0" y="1184.4" font-size="23.26" fill="#000" font-weight="bold" textLength="98.0" lengthAdjust="spacingAndGlyphs">3,00 km</text><text x="1705.0" y="1218.5" font-size="23.26" fill="#000" font-weight="bold" textLength="98.0" lengthAdjust="spacingAndGlyphs">5,00 km</text><text x="1705.0" y="1252.6" font-size="23.26" fill="#000" font-weight="bold" textLength="112.0" lengthAdjust="spacingAndGlyphs">10,00 km</text><text x="346.0" y="350.8" font-size="23.69" fill="#3d1619" font-weight="bold" textLength="106.0" lengthAdjust="spacingAndGlyphs">WOCHE</text></g>
<text x="420.8" y="1215.6" font-size="20.64" fill="#333" text-anchor="end">0</text>
<text x="420.8" y="1054.6" font-size="20.64" fill="#333" text-anchor="end">50</text>
<text x="420.8" y="893.6" font-size="20.64" fill="#333" text-anchor="end">100</text>
<text x="420.8" y="732.6" font-size="20.64" fill="#333" text-anchor="end">150</text>
<text x="420.8" y="571.6" font-size="20.64" fill="#333" text-anchor="end">200</text>
<text x="420.8" y="410.6" font-size="20.64" fill="#333" text-anchor="end">250</text>
<text x="1770.6" y="1216.0" font-size="21.80" fill="#333">35.0</text>
<text x="1840.0" y="1216.0" font-size="21.80" fill="#333">0</text>
<text x="1915.7" y="1216.0" font-size="21.80" fill="#333">0 %</text>
<text x="1770.6" y="1055.0" font-size="21.80" fill="#333">40.0</text>
<text x="1840.0" y="1055.0" font-size="21.80" fill="#333">266</text>
<text x="1915.7" y="1055.0" font-size="21.80" fill="#333">20 %</text>
<text x="1770.6" y="894.0" font-size="21.80" fill="#333">45.0</text>
<text x="1840.0" y="894.0" font-size="21.80" fill="#333">532</text>
<text x="1915.7" y="894.0" font-size="21.80" fill="#333">40 %</text>
<text x="1770.6" y="733.0" font-size="21.80" fill="#333">50.0</text>
<text x="1840.0" y="733.0" font-size="21.80" fill="#333">798</text>
<text x="1915.7" y="733.0" font-size="21.80" fill="#333">60 %</text>
<text x="1770.6" y="572.0" font-size="21.80" fill="#333">55.0</text>
<text x="1840.0" y="572.0" font-size="21.80" fill="#333">1064</text>
<text x="1915.7" y="572.0" font-size="21.80" fill="#333">80 %</text>
<text x="1770.6" y="411.0" font-size="21.80" fill="#333">60.0</text>
<text x="1840.0" y="411.0" font-size="21.80" fill="#333">1330</text>
<text x="1915.7" y="411.0" font-size="21.80" fill="#333">100 %</text>
<text x="562.5" y="1237.1" font-size="21.08" fill="#333" text-anchor="middle">Jan</text>
<text x="755.6" y="1237.1" font-size="21.08" fill="#333" text-anchor="middle">Feb</text>
<text x="931.7" y="1237.1" font-size="21.08" fill="#333" text-anchor="middle">Mrz</text>
<text x="1125.1" y="1237.1" font-size="21.08" fill="#333" text-anchor="middle">Apr</text>
<text x="1313.0" y="1237.1" font-size="21.08" fill="#333" text-anchor="middle">Mai</text>
<text x="1507.2" y="1237.1" font-size="21.08" fill="#333" text-anchor="middle">Jun</text>
<text x="1695.2" y="1237.1" font-size="21.08" fill="#333" text-anchor="middle">Jul</text>
<rect x="0.0" y="0.0" width="2360.0" height="155.0" fill="#ffffff"/>
<text x="33.0" y="32.5" font-size="25.44" fill="#000" textLength="65.0" lengthAdjust="spacingAndGlyphs" stroke="#000" stroke-width="0.7">07:00</text>
<text x="121.0" y="32.5" font-size="25.44" fill="#000" textLength="163.0" lengthAdjust="spacingAndGlyphs" stroke="#000" stroke-width="0.7">Freitag 9. Juni</text>
<circle cx="1164" cy="23.7" r="5" fill="#9b9b9b"/>
<circle cx="1180" cy="23.7" r="5" fill="#9b9b9b"/>
<circle cx="1196" cy="23.7" r="5" fill="#9b9b9b"/>
<g fill="#000"><path d="M2175,20.5 A24,24 0 0 1 2203,20.5 L2200,24 A19,19 0 0 0 2178,24 Z"/><path d="M2180.5,26.5 A15,15 0 0 1 2197.5,26.5 L2194.5,30 A10.5,10.5 0 0 0 2183.5,30 Z"/><path d="M2185.5,32 A7,7 0 0 1 2192.5,32 L2189,36 Z"/></g>
<text x="2212.0" y="32.0" font-size="24.71" fill="#000" textLength="58.6" lengthAdjust="spacingAndGlyphs" stroke="#000" stroke-width="0.7">48 %</text>
<rect x="2278.6" y="13.5" width="44.5" height="21" rx="6" fill="none" stroke="#a0a0a0" stroke-width="2"/>
<rect x="2281.5" y="16.5" width="18.5" height="15.0" fill="#000" rx="3.0"/>
<path d="M2326,20.5 Q2329.5,24 2326,27.5 Z" fill="#a0a0a0"/>
<rect x="48" y="76" width="52.5" height="40.5" rx="7" fill="none" stroke="#3478f6" stroke-width="3.2"/>
<line x1="65.0" y1="76.0" x2="65.0" y2="116.5" stroke="#3478f6" stroke-width="3.2"/>
<line x1="53.0" y1="85.5" x2="59.5" y2="85.5" stroke="#3478f6" stroke-width="2.4" stroke-linecap="round"/>
<line x1="53.0" y1="91.5" x2="59.5" y2="91.5" stroke="#3478f6" stroke-width="2.4" stroke-linecap="round"/>
<line x1="53.0" y1="98.0" x2="59.5" y2="98.0" stroke="#3478f6" stroke-width="2.4" stroke-linecap="round"/>
<polyline points="202,77.5 181,96 202,114.5" fill="none" stroke="#3478f6" stroke-width="3.6" stroke-linecap="round" stroke-linejoin="round"/>
<polyline points="290,77.5 311,96 290,114.5" fill="none" stroke="#d2d2d2" stroke-width="3.6" stroke-linecap="round" stroke-linejoin="round"/>
<rect x="516.5" y="56.0" width="1327.1" height="78.6" fill="#e9eaea" rx="27.0"/>
<text x="537.0" y="110.0" font-size="26.16" fill="#000" textLength="21.0" lengthAdjust="spacingAndGlyphs">A</text>
<text x="558.0" y="110.0" font-size="39.24" fill="#000" textLength="21.0" lengthAdjust="spacingAndGlyphs">A</text>
<path d="M1057.5,92 V87 A5.5,5.5 0 0 1 1068.5,87 V92" fill="none" stroke="#8a8a8e" stroke-width="3"/>
<rect x="1053.0" y="92.0" width="20.0" height="17.0" fill="#8a8a8e" rx="2.5"/>
<text x="1089.0" y="109.4" font-size="40.5" fill="#000" textLength="221.5" lengthAdjust="spacingAndGlyphs">runalyze.com</text>
<path d="M1819.5,97 A15,15 0 1 1 1807,81" fill="none" stroke="#000" stroke-width="3" stroke-linecap="round"/>
<polyline points="1802,75 1809,81 1802,87" fill="none" stroke="#000" stroke-width="3" stroke-linecap="round" stroke-linejoin="round"/>
<path d="M2032,84.5 H2026 A4,4 0 0 0 2022,88.5 V115.5 A4,4 0 0 0 2026,119.5 H2058 A4,4 0 0 0 2062,115.5 V88.5 A4,4 0 0 0 2058,84.5 H2052" fill="none" stroke="#3478f6" stroke-width="3.2" stroke-linecap="round"/>
<line x1="2042.0" y1="69.0" x2="2042.0" y2="101.0" stroke="#3478f6" stroke-width="3.2" stroke-linecap="round"/>
<polyline points="2033,77 2042,68.5 2051,77" fill="none" stroke="#3478f6" stroke-width="3.2" stroke-linecap="round" stroke-linejoin="round"/>
<line x1="2162.5" y1="77.0" x2="2162.5" y2="113.0" stroke="#3478f6" stroke-width="3.2" stroke-linecap="round"/>
<line x1="2144.5" y1="95.0" x2="2180.5" y2="95.0" stroke="#3478f6" stroke-width="3.2" stroke-linecap="round"/>
<path d="M2275,108 H2270 A5,5 0 0 1 2265,103 V78 A5,5 0 0 1 2270,73 H2295 A5,5 0 0 1 2300,78 V82" fill="none" stroke="#3478f6" stroke-width="3.2"/>
<rect x="2276" y="83" width="36" height="35.5" rx="5" fill="none" stroke="#3478f6" stroke-width="3.2"/>
<rect x="0.0" y="155.0" width="1770.0" height="66.0" fill="#e9e9e9"/>
<rect x="1770.0" y="155.0" width="590.0" height="66.0" fill="#ffffff"/>
<line x1="590.5" y1="155.0" x2="590.5" y2="221.0" stroke="#c4c4c4" stroke-width="1.2"/>
<line x1="1180.5" y1="155.0" x2="1180.5" y2="221.0" stroke="#c4c4c4" stroke-width="1.2"/>
<circle cx="81.0" cy="189" r="13" fill="none" stroke="#4fc3f7" stroke-width="2.6" stroke-dasharray="3 2.2"/><rect x="79.0" y="180.0" width="19.0" height="18.0" fill="#e9e9e9"/><text x="70.0" y="195.0" font-size="17.44" fill="#000" font-weight="bold" font-style="italic" textLength="27.0" lengthAdjust="spacingAndGlyphs" font-family="Liberation Serif">tri</text>
<text x="107.0" y="197.5" font-size="25.44" fill="#828282" textLength="449.3" lengthAdjust="spacingAndGlyphs" stroke="#828282" stroke-width="0.8">TV | Trainingpläne | Coaching | Camp...</text>
<defs><linearGradient id="rwg" x1="0" y1="0" x2="0" y2="1"><stop offset="0" stop-color="#3f93c9"/><stop offset="1" stop-color="#6ec2dd"/></linearGradient></defs>
<rect x="656.0" y="173.0" width="32.0" height="32.0" fill="url(#rwg)"/>
<text x="657.0" y="197.0" font-size="21.80" fill="#fff" font-weight="bold" font-style="italic" textLength="30.0" lengthAdjust="spacingAndGlyphs">RW</text>
<text x="698.0" y="197.5" font-size="25.44" fill="#828282" textLength="453.0" lengthAdjust="spacingAndGlyphs" stroke="#828282" stroke-width="0.8">(5) RUNNER&#x27;S WORLD - Antwort erst...</text>
<circle cx="1261.0" cy="189" r="13" fill="none" stroke="#4fc3f7" stroke-width="2.6" stroke-dasharray="3 2.2"/><rect x="1259.0" y="180.0" width="19.0" height="18.0" fill="#e9e9e9"/><text x="1250.0" y="195.0" font-size="17.44" fill="#000" font-weight="bold" font-style="italic" textLength="27.0" lengthAdjust="spacingAndGlyphs" font-family="Liberation Serif">tri</text>
<text x="1287.0" y="197.5" font-size="25.44" fill="#828282" textLength="438.6" lengthAdjust="spacingAndGlyphs" stroke="#828282" stroke-width="0.8">Europas aktivstes Triathlon Forum -...</text>
<rect x="1791.0" y="177.0" width="24.0" height="24.0" fill="#8e8e8e" rx="4.0"/>
<path d="M1797.5,183.5 L1808.5,194.5 M1808.5,183.5 L1797.5,194.5" stroke="#fff" stroke-width="2.6" stroke-linecap="round"/>
<rect x="1981.0" y="173.0" width="32.0" height="32.0" fill="#c9c9ce" rx="7.0"/>
<text x="1997.0" y="197.0" font-size="23.26" fill="#fff" text-anchor="middle">R</text>
<text x="2022.0" y="197.0" font-size="24.71" fill="#000" textLength="127.0" lengthAdjust="spacingAndGlyphs" stroke="#000" stroke-width="0.8">RUNALYZE</text>
<circle cx="2014" cy="260.6" r="26" fill="#000" stroke="#fff" stroke-width="3.6"/>
<path d="M2006.5,253.1 L2021.5,268.1 M2021.5,253.1 L2006.5,268.1" stroke="#fff" stroke-width="4.4" stroke-linecap="square"/>
<path d="M1902,569.3 H2060 V581 L2069.7,593 L2060,605 V616.7 H1902 Z" fill="#133a47" fill-opacity="0.92"/>
<text x="1918.6" y="601.0" font-size="22.67" fill="#ffffff" textLength="123.8" lengthAdjust="spacingAndGlyphs">Zeige Form</text>
<rect x="865.0" y="1613.6" width="629.6" height="10.7" fill="#ebebeb" rx="5.3"/>
</svg>
</body></html>
